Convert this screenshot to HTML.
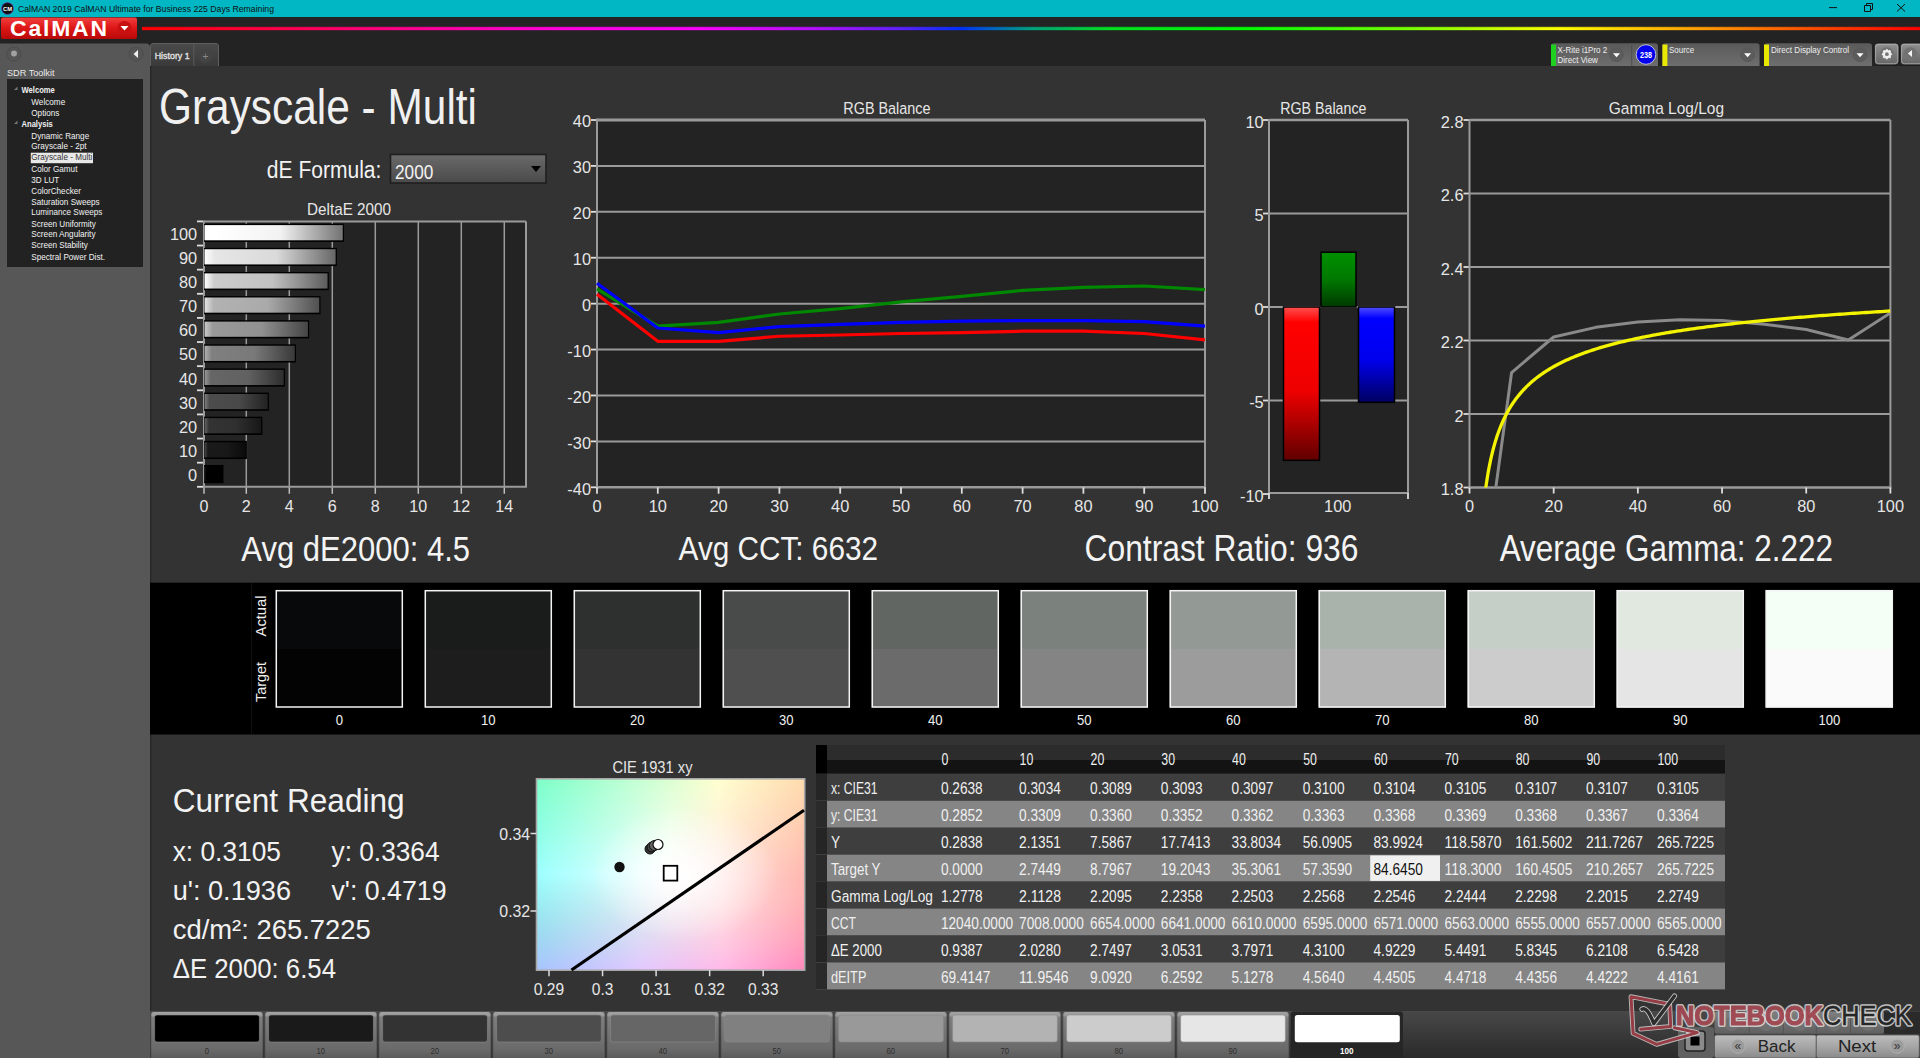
<!DOCTYPE html>
<html><head><meta charset="utf-8"><title>CalMAN</title>
<style>html,body{margin:0;padding:0;background:#333;overflow:hidden;width:1920px;height:1058px}
svg{display:block;font-family:"Liberation Sans",sans-serif}</style></head>
<body><svg width="1920" height="1058" viewBox="0 0 1920 1058">
<defs><linearGradient id="calred" x1="0" y1="0" x2="0" y2="1"><stop offset="0" stop-color="#f04040"/><stop offset="0.45" stop-color="#e01818"/><stop offset="1" stop-color="#b80808"/></linearGradient>
<linearGradient id="rainbow" x1="0" y1="0" x2="1" y2="0"><stop offset="0.0" stop-color="#ff0000"/><stop offset="0.117" stop-color="#ff0070"/><stop offset="0.2351" stop-color="#ff00e0"/><stop offset="0.3138" stop-color="#ff00ff"/><stop offset="0.3813" stop-color="#b010ff"/><stop offset="0.4263" stop-color="#6020ff"/><stop offset="0.4601" stop-color="#0030ff"/><stop offset="0.4994" stop-color="#00a080"/><stop offset="0.5444" stop-color="#00e020"/><stop offset="0.6232" stop-color="#00ff00"/><stop offset="0.7188" stop-color="#80ff00"/><stop offset="0.7975" stop-color="#ffff00"/><stop offset="0.8875" stop-color="#ff9000"/><stop offset="1.0" stop-color="#ff0000"/></linearGradient>
<linearGradient id="tabg" x1="0" y1="0" x2="0" y2="1"><stop offset="0" stop-color="#4a4a4a"/><stop offset="1" stop-color="#3a3a3a"/></linearGradient>
<linearGradient id="tbg" x1="0" y1="0" x2="0" y2="1"><stop offset="0" stop-color="#5a5a5a"/><stop offset="1" stop-color="#6e6e6e"/></linearGradient>
<linearGradient id="btng" x1="0" y1="0" x2="0" y2="1"><stop offset="0" stop-color="#9a9a9a"/><stop offset="0.15" stop-color="#8a8a8a"/><stop offset="1" stop-color="#646464"/></linearGradient>
<linearGradient id="ddg" x1="0" y1="0" x2="0" y2="1"><stop offset="0" stop-color="#6a6a6a"/><stop offset="1" stop-color="#4a4a4a"/></linearGradient>
<linearGradient id="bar100" x1="0" y1="0" x2="1" y2="0"><stop offset="0" stop-color="#ffffff"/><stop offset="0.08" stop-color="#ffffff"/><stop offset="0.55" stop-color="#f2f2f2"/><stop offset="1" stop-color="#737373"/></linearGradient>
<linearGradient id="bar90" x1="0" y1="0" x2="1" y2="0"><stop offset="0" stop-color="#ffffff"/><stop offset="0.08" stop-color="#e6e6e6"/><stop offset="0.55" stop-color="#dadada"/><stop offset="1" stop-color="#676767"/></linearGradient>
<linearGradient id="bar80" x1="0" y1="0" x2="1" y2="0"><stop offset="0" stop-color="#fefefe"/><stop offset="0.08" stop-color="#cccccc"/><stop offset="0.55" stop-color="#c2c2c2"/><stop offset="1" stop-color="#5c5c5c"/></linearGradient>
<linearGradient id="bar70" x1="0" y1="0" x2="1" y2="0"><stop offset="0" stop-color="#e4e4e4"/><stop offset="0.08" stop-color="#b2b2b2"/><stop offset="0.55" stop-color="#aaaaaa"/><stop offset="1" stop-color="#505050"/></linearGradient>
<linearGradient id="bar60" x1="0" y1="0" x2="1" y2="0"><stop offset="0" stop-color="#cbcbcb"/><stop offset="0.08" stop-color="#999999"/><stop offset="0.55" stop-color="#919191"/><stop offset="1" stop-color="#454545"/></linearGradient>
<linearGradient id="bar50" x1="0" y1="0" x2="1" y2="0"><stop offset="0" stop-color="#b2b2b2"/><stop offset="0.08" stop-color="#808080"/><stop offset="0.55" stop-color="#797979"/><stop offset="1" stop-color="#393939"/></linearGradient>
<linearGradient id="bar40" x1="0" y1="0" x2="1" y2="0"><stop offset="0" stop-color="#989898"/><stop offset="0.08" stop-color="#666666"/><stop offset="0.55" stop-color="#616161"/><stop offset="1" stop-color="#2e2e2e"/></linearGradient>
<linearGradient id="bar30" x1="0" y1="0" x2="1" y2="0"><stop offset="0" stop-color="#7e7e7e"/><stop offset="0.08" stop-color="#4c4c4c"/><stop offset="0.55" stop-color="#494949"/><stop offset="1" stop-color="#222222"/></linearGradient>
<linearGradient id="bar20" x1="0" y1="0" x2="1" y2="0"><stop offset="0" stop-color="#656565"/><stop offset="0.08" stop-color="#333333"/><stop offset="0.55" stop-color="#303030"/><stop offset="1" stop-color="#171717"/></linearGradient>
<linearGradient id="bar10" x1="0" y1="0" x2="1" y2="0"><stop offset="0" stop-color="#4c4c4c"/><stop offset="0.08" stop-color="#1a1a1a"/><stop offset="0.55" stop-color="#181818"/><stop offset="1" stop-color="#0b0b0b"/></linearGradient>
<linearGradient id="bar0" x1="0" y1="0" x2="1" y2="0"><stop offset="0" stop-color="#323232"/><stop offset="0.08" stop-color="#000000"/><stop offset="0.55" stop-color="#000000"/><stop offset="1" stop-color="#000000"/></linearGradient>
<linearGradient id="rbar" x1="0" y1="0" x2="0" y2="1"><stop offset="0" stop-color="#ff5050"/><stop offset="0.1" stop-color="#ff0000"/><stop offset="0.55" stop-color="#ee0000"/><stop offset="1" stop-color="#600000"/></linearGradient>
<linearGradient id="gbar" x1="0" y1="0" x2="0" y2="1"><stop offset="0" stop-color="#009000"/><stop offset="0.5" stop-color="#007800"/><stop offset="1" stop-color="#003800"/></linearGradient>
<linearGradient id="bbar" x1="0" y1="0" x2="0" y2="1"><stop offset="0" stop-color="#5050ff"/><stop offset="0.12" stop-color="#0000ff"/><stop offset="0.55" stop-color="#0000ee"/><stop offset="1" stop-color="#000060"/></linearGradient>
<linearGradient id="cieTop" x1="0" y1="0" x2="1" y2="0"><stop offset="0" stop-color="#7dffc8"/><stop offset="0.35" stop-color="#c0ffd4"/><stop offset="0.68" stop-color="#ffffd0"/><stop offset="1" stop-color="#ffdcae"/></linearGradient>
<linearGradient id="cieBot" x1="0" y1="0" x2="1" y2="0"><stop offset="0" stop-color="#a8c4ff"/><stop offset="0.4" stop-color="#e4c8ff"/><stop offset="0.7" stop-color="#ffb8e8"/><stop offset="1" stop-color="#ff88bc"/></linearGradient>
<linearGradient id="cieMid" x1="0" y1="0" x2="1" y2="0"><stop offset="0" stop-color="#9cffff"/><stop offset="0.5" stop-color="#ffffff"/><stop offset="1" stop-color="#ffb8b0"/></linearGradient>
<linearGradient id="fadeDown" x1="0" y1="0" x2="0" y2="1"><stop offset="0" stop-color="#fff" stop-opacity="0"/><stop offset="1" stop-color="#fff" stop-opacity="1"/></linearGradient>
<linearGradient id="fadeMid" x1="0" y1="0" x2="0" y2="1"><stop offset="0" stop-color="#fff" stop-opacity="0"/><stop offset="0.5" stop-color="#fff" stop-opacity="1"/><stop offset="1" stop-color="#fff" stop-opacity="0"/></linearGradient>
<mask id="mDown"><rect x="536.5" y="874.5" width="268.2" height="95.7" fill="url(#fadeDown)"/></mask>
<mask id="mMid"><rect x="536.5" y="778.8" width="268.2" height="191.4" fill="url(#fadeMid)"/></mask>
<radialGradient id="cieW" cx="0.55" cy="0.5" r="0.35"><stop offset="0" stop-color="#fff" stop-opacity="0.9"/><stop offset="1" stop-color="#fff" stop-opacity="0"/></radialGradient>
<linearGradient id="stripg" x1="0" y1="0" x2="0" y2="1"><stop offset="0" stop-color="#484848"/><stop offset="0.1" stop-color="#454545"/><stop offset="1" stop-color="#2a2a2a"/></linearGradient>
<linearGradient id="sbtn" x1="0" y1="0" x2="0" y2="1"><stop offset="0" stop-color="#a4a4a4"/><stop offset="0.08" stop-color="#9a9a9a"/><stop offset="0.12" stop-color="#7e7e7e"/><stop offset="0.75" stop-color="#6a6a6a"/><stop offset="1" stop-color="#555555"/></linearGradient>
<linearGradient id="navg" x1="0" y1="0" x2="0" y2="1"><stop offset="0" stop-color="#bdbdbd"/><stop offset="0.5" stop-color="#a6a6a6"/><stop offset="1" stop-color="#8a8a8a"/></linearGradient>
<linearGradient id="rowg" x1="0" y1="0" x2="0" y2="1"><stop offset="0" stop-color="#808080"/><stop offset="1" stop-color="#606060"/></linearGradient></defs>
<rect x="0.00" y="0.00" width="1920.00" height="17.00" fill="#00b7c3"/>
<circle cx="7.50" cy="8.50" r="6.00" fill="#111"/>
<circle cx="7.5" cy="8.5" r="6" fill="none" stroke="#7a3ccf" stroke-width="0.8" opacity="0.7"/>
<text x="7.50" y="10.60" font-size="6.00" fill="#fff" text-anchor="middle" textLength="9.00" lengthAdjust="spacingAndGlyphs" font-weight="bold">CM</text>
<text x="17.90" y="11.70" font-size="9.13" fill="#101010" textLength="256.10" lengthAdjust="spacingAndGlyphs">CalMAN 2019 CalMAN Ultimate for Business 225 Days Remaining</text>
<line x1="1829.00" y1="7.60" x2="1837.00" y2="7.60" stroke="#111" stroke-width="1.00"/>
<path d="M1864.5,5.5 h6 v6 h-6 z" fill="none" stroke="#111" stroke-width="1.00"/>
<path d="M1866.5,5.5 v-2 h6 v6 h-2" fill="none" stroke="#111" stroke-width="1.00"/>
<line x1="1897.00" y1="4.00" x2="1905.00" y2="11.50" stroke="#111" stroke-width="1.00"/>
<line x1="1905.00" y1="4.00" x2="1897.00" y2="11.50" stroke="#111" stroke-width="1.00"/>
<rect x="0.00" y="17.00" width="1920.00" height="49.00" fill="#232323"/>
<rect x="1" y="17.5" width="136" height="21.5" rx="2" fill="url(#calred)"/>
<text x="10.00" y="35.80" font-size="22.90" fill="#ffffff" textLength="97.00" lengthAdjust="spacing" font-weight="bold">CalMAN</text>
<circle cx="124.50" cy="28.00" r="7.00" fill="#c81010"/>
<path d="M120.5,26 L128.5,26 L124.5,30.5 Z" fill="#ffffff" stroke="none" stroke-width="1.00"/>
<rect x="142.00" y="26.50" width="1778.00" height="4.00" fill="url(#rainbow)" opacity="0.35"/>
<rect x="142.00" y="27.20" width="1778.00" height="2.80" fill="url(#rainbow)"/>
<path d="M0,43.5 H146 Q150,43.5 150,47.5 V1058 H0 Z" fill="#575757" stroke="none" stroke-width="1.00"/>
<circle cx="14.00" cy="54.00" r="7.00" fill="#555" stroke="#4c4c4c" stroke-width="1"/>
<circle cx="14.00" cy="53.50" r="3.00" fill="#a0a0a0"/>
<circle cx="136.00" cy="54.00" r="7.00" fill="#555" stroke="#4c4c4c" stroke-width="1"/>
<path d="M138,50 L138,58 L133.5,54 Z" fill="#f0f0f0" stroke="none" stroke-width="1.00"/>
<text x="7.00" y="76.00" font-size="9.86" fill="#e8e8e8" textLength="47.50" lengthAdjust="spacingAndGlyphs">SDR Toolkit</text>
<rect x="7.00" y="79.00" width="136.00" height="188.00" fill="#222222"/>
<rect x="30.80" y="152.70" width="62.20" height="10.50" fill="#e8e8e8"/>
<text x="21.50" y="92.60" font-size="8.84" fill="#f2f2f2" textLength="33.38" lengthAdjust="spacingAndGlyphs" font-weight="bold">Welcome</text>
<text x="31.30" y="104.70" font-size="8.84" fill="#f2f2f2" textLength="33.90" lengthAdjust="spacingAndGlyphs">Welcome</text>
<text x="31.30" y="115.50" font-size="8.84" fill="#f2f2f2" textLength="28.03" lengthAdjust="spacingAndGlyphs">Options</text>
<text x="21.50" y="126.70" font-size="8.84" fill="#f2f2f2" textLength="31.27" lengthAdjust="spacingAndGlyphs" font-weight="bold">Analysis</text>
<text x="31.30" y="138.70" font-size="8.84" fill="#f2f2f2" textLength="57.86" lengthAdjust="spacingAndGlyphs">Dynamic Range</text>
<text x="31.30" y="149.30" font-size="8.84" fill="#f2f2f2" textLength="55.15" lengthAdjust="spacingAndGlyphs">Grayscale - 2pt</text>
<text x="31.30" y="160.20" font-size="8.84" fill="#333333" textLength="61.01" lengthAdjust="spacingAndGlyphs">Grayscale - Multi</text>
<text x="31.30" y="171.60" font-size="8.84" fill="#f2f2f2" textLength="46.10" lengthAdjust="spacingAndGlyphs">Color Gamut</text>
<text x="31.30" y="182.50" font-size="8.84" fill="#f2f2f2" textLength="28.02" lengthAdjust="spacingAndGlyphs">3D LUT</text>
<text x="31.30" y="193.60" font-size="8.84" fill="#f2f2f2" textLength="49.72" lengthAdjust="spacingAndGlyphs">ColorChecker</text>
<text x="31.30" y="204.50" font-size="8.84" fill="#f2f2f2" textLength="68.27" lengthAdjust="spacingAndGlyphs">Saturation Sweeps</text>
<text x="31.30" y="215.40" font-size="8.84" fill="#f2f2f2" textLength="70.98" lengthAdjust="spacingAndGlyphs">Luminance Sweeps</text>
<text x="31.30" y="226.50" font-size="8.84" fill="#f2f2f2" textLength="64.63" lengthAdjust="spacingAndGlyphs">Screen Uniformity</text>
<text x="31.30" y="237.40" font-size="8.84" fill="#f2f2f2" textLength="64.20" lengthAdjust="spacingAndGlyphs">Screen Angularity</text>
<text x="31.30" y="248.30" font-size="8.84" fill="#f2f2f2" textLength="56.51" lengthAdjust="spacingAndGlyphs">Screen Stability</text>
<text x="31.30" y="259.60" font-size="8.84" fill="#f2f2f2" textLength="73.68" lengthAdjust="spacingAndGlyphs">Spectral Power Dist.</text>
<path d="M14,90 L17.5,90 L17.5,86.5 Z" fill="#777" stroke="none" stroke-width="1.00"/>
<path d="M14,124 L17.5,124 L17.5,120.5 Z" fill="#777" stroke="none" stroke-width="1.00"/>
<path d="M150.5,66 V46 Q150.5,43.5 153,43.5 H216 Q218.5,43.5 218.5,46 V66" fill="url(#tabg)" stroke="#5e5e5e" stroke-width="1"/>
<line x1="193.80" y1="44.00" x2="193.80" y2="66.00" stroke="#5a5a5a" stroke-width="1.00"/>
<text x="154.70" y="58.80" font-size="9.86" fill="#e4e4e4" textLength="35.00" lengthAdjust="spacingAndGlyphs" stroke="#e4e4e4" stroke-width="0.35">History 1</text>
<circle cx="205.50" cy="56.00" r="7.00" fill="#444"/>
<text x="205.50" y="59.50" font-size="10.00" fill="#8a8a8a" text-anchor="middle">+</text>
<path d="M1551.0,66 V46 Q1551.0,43.3 1554.0,43.3 H1655.0 Q1658.0,43.3 1658.0,46 V66 Z" fill="url(#tbg)"/>
<rect x="1551.00" y="44.50" width="5.00" height="21.50" fill="#20d020"/>
<text x="1557.50" y="52.60" font-size="8.41" fill="#eeeeee" textLength="49.71" lengthAdjust="spacingAndGlyphs">X-Rite i1Pro 2</text>
<text x="1557.50" y="63.00" font-size="8.41" fill="#eeeeee" textLength="40.38" lengthAdjust="spacingAndGlyphs">Direct View</text>
<circle cx="1616.50" cy="54.70" r="6.80" fill="#5c5c5c" stroke="#555" stroke-width="0.8"/>
<path d="M1613.0,53.2 L1620.0,53.2 L1616.5,57.2 Z" fill="#ffffff" stroke="none" stroke-width="1.00"/>
<line x1="1631.70" y1="45.00" x2="1631.70" y2="66.00" stroke="#4e4e4e" stroke-width="1.00"/>
<circle cx="1646.00" cy="54.50" r="9.80" fill="#0000ee" stroke="#e0e0e0" stroke-width="0.8"/>
<text x="1646.00" y="57.70" font-size="8.99" fill="#ffffff" text-anchor="middle" textLength="11.99" lengthAdjust="spacingAndGlyphs" font-weight="bold">238</text>
<path d="M1662.4,66 V46 Q1662.4,43.3 1665.4,43.3 H1756.6 Q1759.6,43.3 1759.6,46 V66 Z" fill="url(#tbg)"/>
<rect x="1662.40" y="44.50" width="5.00" height="21.50" fill="#e8e800"/>
<text x="1669.00" y="52.60" font-size="8.41" fill="#eeeeee" textLength="25.30" lengthAdjust="spacingAndGlyphs">Source</text>
<circle cx="1747.60" cy="54.70" r="6.80" fill="#5c5c5c" stroke="#555" stroke-width="0.8"/>
<path d="M1744.1,53.2 L1751.1,53.2 L1747.6,57.2 Z" fill="#ffffff" stroke="none" stroke-width="1.00"/>
<path d="M1764.0,66 V46 Q1764.0,43.3 1767.0,43.3 H1869.0 Q1872.0,43.3 1872.0,46 V66 Z" fill="url(#tbg)"/>
<rect x="1764.00" y="44.50" width="5.00" height="21.50" fill="#e8e800"/>
<text x="1771.00" y="52.60" font-size="8.41" fill="#eeeeee" textLength="78.03" lengthAdjust="spacingAndGlyphs">Direct Display Control</text>
<circle cx="1860.00" cy="54.70" r="6.80" fill="#5c5c5c" stroke="#555" stroke-width="0.8"/>
<path d="M1856.5,53.2 L1863.5,53.2 L1860.0,57.2 Z" fill="#ffffff" stroke="none" stroke-width="1.00"/>
<rect x="1874.3" y="43.1" width="24.7" height="21.9" rx="3.5" fill="url(#btng)" stroke="#151515" stroke-width="0.9"/>
<rect x="1875.6" y="44.4" width="22.1" height="19.3" rx="2.8" fill="none" stroke="#b0b0b0" stroke-width="0.7"/>
<circle cx="1886.90" cy="54.20" r="7.00" fill="#727272"/>
<polygon points="1886.90,49.20 1888.39,50.60 1890.44,50.66 1890.50,52.71 1891.90,54.20 1890.50,55.69 1890.44,57.74 1888.39,57.80 1886.90,59.20 1885.41,57.80 1883.36,57.74 1883.30,55.69 1881.90,54.20 1883.30,52.71 1883.36,50.66 1885.41,50.60" fill="#f0f0f0" stroke="#f0f0f0" stroke-width="0.8" stroke-linejoin="round"/>
<circle cx="1886.90" cy="54.20" r="1.90" fill="#787878"/>
<rect x="1900.3" y="43.1" width="30" height="21.9" rx="3.5" fill="url(#btng)" stroke="#151515" stroke-width="0.9"/>
<rect x="1901.6" y="44.4" width="30" height="19.3" rx="2.8" fill="none" stroke="#b0b0b0" stroke-width="0.7"/>
<circle cx="1910.40" cy="54.20" r="7.00" fill="#727272"/>
<path d="M1912,49.9 L1912,57 L1907.9,53.6 Z" fill="#f4f4f4" stroke="none" stroke-width="1.00"/>
<rect x="150.00" y="66.00" width="1770.00" height="992.00" fill="#333333"/>
<line x1="150.60" y1="66.00" x2="150.60" y2="1058.00" stroke="#262626" stroke-width="1.20"/>
<text x="159.00" y="124.40" font-size="50.58" fill="#f0f0f0" textLength="318.00" lengthAdjust="spacingAndGlyphs">Grayscale - Multi</text>
<text x="266.80" y="177.50" font-size="24.49" fill="#f2f2f2" textLength="114.60" lengthAdjust="spacingAndGlyphs">dE Formula:</text>
<rect x="390.5" y="154.5" width="155.5" height="28.5" fill="url(#ddg)" stroke="#1e1e1e" stroke-width="1.6"/>
<text x="395.00" y="178.80" font-size="20.00" fill="#f2f2f2" textLength="38.26" lengthAdjust="spacingAndGlyphs">2000</text>
<path d="M531,166 L541,166 L536,172 Z" fill="#000000" stroke="none" stroke-width="1.00"/>
<rect x="204.00" y="221.40" width="322.00" height="265.40" fill="#232323"/>
<text x="307.00" y="215.20" font-size="16.81" fill="#e6e6e6" textLength="84.00" lengthAdjust="spacingAndGlyphs">DeltaE 2000</text>
<line x1="246.30" y1="221.40" x2="246.30" y2="486.80" stroke="#9a9a9a" stroke-width="1.50"/>
<line x1="289.30" y1="221.40" x2="289.30" y2="486.80" stroke="#9a9a9a" stroke-width="1.50"/>
<line x1="332.30" y1="221.40" x2="332.30" y2="486.80" stroke="#9a9a9a" stroke-width="1.50"/>
<line x1="375.30" y1="221.40" x2="375.30" y2="486.80" stroke="#9a9a9a" stroke-width="1.50"/>
<line x1="418.30" y1="221.40" x2="418.30" y2="486.80" stroke="#9a9a9a" stroke-width="1.50"/>
<line x1="461.30" y1="221.40" x2="461.30" y2="486.80" stroke="#9a9a9a" stroke-width="1.50"/>
<line x1="504.30" y1="221.40" x2="504.30" y2="486.80" stroke="#9a9a9a" stroke-width="1.50"/>
<line x1="204.00" y1="486.80" x2="204.00" y2="493.80" stroke="#bdbdbd" stroke-width="1.50"/>
<text x="204.00" y="511.80" font-size="17.10" fill="#e6e6e6" text-anchor="middle" textLength="8.94" lengthAdjust="spacingAndGlyphs">0</text>
<line x1="246.30" y1="486.80" x2="246.30" y2="493.80" stroke="#bdbdbd" stroke-width="1.50"/>
<text x="246.30" y="511.80" font-size="17.10" fill="#e6e6e6" text-anchor="middle" textLength="8.94" lengthAdjust="spacingAndGlyphs">2</text>
<line x1="289.30" y1="486.80" x2="289.30" y2="493.80" stroke="#bdbdbd" stroke-width="1.50"/>
<text x="289.30" y="511.80" font-size="17.10" fill="#e6e6e6" text-anchor="middle" textLength="8.94" lengthAdjust="spacingAndGlyphs">4</text>
<line x1="332.30" y1="486.80" x2="332.30" y2="493.80" stroke="#bdbdbd" stroke-width="1.50"/>
<text x="332.30" y="511.80" font-size="17.10" fill="#e6e6e6" text-anchor="middle" textLength="8.94" lengthAdjust="spacingAndGlyphs">6</text>
<line x1="375.30" y1="486.80" x2="375.30" y2="493.80" stroke="#bdbdbd" stroke-width="1.50"/>
<text x="375.30" y="511.80" font-size="17.10" fill="#e6e6e6" text-anchor="middle" textLength="8.94" lengthAdjust="spacingAndGlyphs">8</text>
<line x1="418.30" y1="486.80" x2="418.30" y2="493.80" stroke="#bdbdbd" stroke-width="1.50"/>
<text x="418.30" y="511.80" font-size="17.10" fill="#e6e6e6" text-anchor="middle" textLength="17.88" lengthAdjust="spacingAndGlyphs">10</text>
<line x1="461.30" y1="486.80" x2="461.30" y2="493.80" stroke="#bdbdbd" stroke-width="1.50"/>
<text x="461.30" y="511.80" font-size="17.10" fill="#e6e6e6" text-anchor="middle" textLength="17.88" lengthAdjust="spacingAndGlyphs">12</text>
<line x1="504.30" y1="486.80" x2="504.30" y2="493.80" stroke="#bdbdbd" stroke-width="1.50"/>
<text x="504.30" y="511.80" font-size="17.10" fill="#e6e6e6" text-anchor="middle" textLength="17.88" lengthAdjust="spacingAndGlyphs">14</text>
<line x1="204.00" y1="221.40" x2="526.00" y2="221.40" stroke="#9a9a9a" stroke-width="2.00"/>
<line x1="526.00" y1="221.40" x2="526.00" y2="486.80" stroke="#9a9a9a" stroke-width="2.00"/>
<line x1="204.00" y1="220.40" x2="204.00" y2="487.80" stroke="#9a9a9a" stroke-width="2.00"/>
<line x1="203.00" y1="486.80" x2="527.00" y2="486.80" stroke="#9a9a9a" stroke-width="2.00"/>
<line x1="197.00" y1="221.40" x2="203.00" y2="221.40" stroke="#dddddd" stroke-width="1.80"/>
<line x1="197.00" y1="245.53" x2="203.00" y2="245.53" stroke="#dddddd" stroke-width="1.80"/>
<line x1="197.00" y1="269.65" x2="203.00" y2="269.65" stroke="#dddddd" stroke-width="1.80"/>
<line x1="197.00" y1="293.78" x2="203.00" y2="293.78" stroke="#dddddd" stroke-width="1.80"/>
<line x1="197.00" y1="317.91" x2="203.00" y2="317.91" stroke="#dddddd" stroke-width="1.80"/>
<line x1="197.00" y1="342.04" x2="203.00" y2="342.04" stroke="#dddddd" stroke-width="1.80"/>
<line x1="197.00" y1="366.16" x2="203.00" y2="366.16" stroke="#dddddd" stroke-width="1.80"/>
<line x1="197.00" y1="390.29" x2="203.00" y2="390.29" stroke="#dddddd" stroke-width="1.80"/>
<line x1="197.00" y1="414.42" x2="203.00" y2="414.42" stroke="#dddddd" stroke-width="1.80"/>
<line x1="197.00" y1="438.55" x2="203.00" y2="438.55" stroke="#dddddd" stroke-width="1.80"/>
<line x1="197.00" y1="462.67" x2="203.00" y2="462.67" stroke="#dddddd" stroke-width="1.80"/>
<line x1="197.00" y1="486.80" x2="203.00" y2="486.80" stroke="#dddddd" stroke-width="1.80"/>
<rect x="204.00" y="223.70" width="139.97" height="18.20" fill="#000000"/>
<rect x="204.50" y="225.10" width="138.27" height="15.20" fill="url(#bar100)"/>
<text x="197.20" y="239.76" font-size="17.39" fill="#e6e6e6" text-anchor="end" textLength="27.28" lengthAdjust="spacingAndGlyphs">100</text>
<rect x="204.00" y="247.83" width="132.83" height="18.20" fill="#000000"/>
<rect x="204.50" y="249.23" width="131.13" height="15.20" fill="url(#bar90)"/>
<text x="197.20" y="263.89" font-size="17.39" fill="#e6e6e6" text-anchor="end" textLength="18.18" lengthAdjust="spacingAndGlyphs">90</text>
<rect x="204.00" y="271.95" width="124.74" height="18.20" fill="#000000"/>
<rect x="204.50" y="273.35" width="123.04" height="15.20" fill="url(#bar80)"/>
<text x="197.20" y="288.02" font-size="17.39" fill="#e6e6e6" text-anchor="end" textLength="18.18" lengthAdjust="spacingAndGlyphs">80</text>
<rect x="204.00" y="296.08" width="116.46" height="18.20" fill="#000000"/>
<rect x="204.50" y="297.48" width="114.76" height="15.20" fill="url(#bar70)"/>
<text x="197.20" y="312.15" font-size="17.39" fill="#e6e6e6" text-anchor="end" textLength="18.18" lengthAdjust="spacingAndGlyphs">70</text>
<rect x="204.00" y="320.21" width="105.14" height="18.20" fill="#000000"/>
<rect x="204.50" y="321.61" width="103.44" height="15.20" fill="url(#bar60)"/>
<text x="197.20" y="336.27" font-size="17.39" fill="#e6e6e6" text-anchor="end" textLength="18.18" lengthAdjust="spacingAndGlyphs">60</text>
<rect x="204.00" y="344.34" width="91.97" height="18.20" fill="#000000"/>
<rect x="204.50" y="345.74" width="90.27" height="15.20" fill="url(#bar50)"/>
<text x="197.20" y="360.40" font-size="17.39" fill="#e6e6e6" text-anchor="end" textLength="18.18" lengthAdjust="spacingAndGlyphs">50</text>
<rect x="204.00" y="368.46" width="80.94" height="18.20" fill="#000000"/>
<rect x="204.50" y="369.86" width="79.24" height="15.20" fill="url(#bar40)"/>
<text x="197.20" y="384.53" font-size="17.39" fill="#e6e6e6" text-anchor="end" textLength="18.18" lengthAdjust="spacingAndGlyphs">40</text>
<rect x="204.00" y="392.59" width="64.94" height="18.20" fill="#000000"/>
<rect x="204.50" y="393.99" width="63.24" height="15.20" fill="url(#bar30)"/>
<text x="197.20" y="408.65" font-size="17.39" fill="#e6e6e6" text-anchor="end" textLength="18.18" lengthAdjust="spacingAndGlyphs">30</text>
<rect x="204.00" y="416.72" width="58.42" height="18.20" fill="#000000"/>
<rect x="204.50" y="418.12" width="56.72" height="15.20" fill="url(#bar20)"/>
<text x="197.20" y="432.78" font-size="17.39" fill="#e6e6e6" text-anchor="end" textLength="18.18" lengthAdjust="spacingAndGlyphs">20</text>
<rect x="204.00" y="440.85" width="42.90" height="18.20" fill="#000000"/>
<rect x="204.50" y="442.25" width="41.20" height="15.20" fill="url(#bar10)"/>
<text x="197.20" y="456.91" font-size="17.39" fill="#e6e6e6" text-anchor="end" textLength="18.18" lengthAdjust="spacingAndGlyphs">10</text>
<rect x="204.00" y="464.97" width="19.48" height="18.20" fill="#000000"/>
<rect x="204.50" y="466.37" width="17.78" height="15.20" fill="url(#bar0)"/>
<text x="197.20" y="481.04" font-size="17.39" fill="#e6e6e6" text-anchor="end" textLength="9.09" lengthAdjust="spacingAndGlyphs">0</text>
<text x="241.30" y="560.60" font-size="35.36" fill="#f4f4f4" textLength="228.70" lengthAdjust="spacingAndGlyphs">Avg dE2000: 4.5</text>
<rect x="597.00" y="120.00" width="608.00" height="367.30" fill="#232323"/>
<text x="843.30" y="113.50" font-size="16.23" fill="#e6e6e6" textLength="87.20" lengthAdjust="spacingAndGlyphs">RGB Balance</text>
<line x1="597.00" y1="165.91" x2="1205.00" y2="165.91" stroke="#9a9a9a" stroke-width="2.00"/>
<line x1="597.00" y1="211.82" x2="1205.00" y2="211.82" stroke="#9a9a9a" stroke-width="2.00"/>
<line x1="597.00" y1="257.74" x2="1205.00" y2="257.74" stroke="#9a9a9a" stroke-width="2.00"/>
<line x1="597.00" y1="303.65" x2="1205.00" y2="303.65" stroke="#9a9a9a" stroke-width="2.00"/>
<line x1="597.00" y1="349.56" x2="1205.00" y2="349.56" stroke="#9a9a9a" stroke-width="2.00"/>
<line x1="597.00" y1="395.48" x2="1205.00" y2="395.48" stroke="#9a9a9a" stroke-width="2.00"/>
<line x1="597.00" y1="441.39" x2="1205.00" y2="441.39" stroke="#9a9a9a" stroke-width="2.00"/>
<line x1="591.00" y1="120.00" x2="597.00" y2="120.00" stroke="#dddddd" stroke-width="1.80"/>
<text x="591.00" y="126.80" font-size="17.39" fill="#e6e6e6" text-anchor="end" textLength="18.18" lengthAdjust="spacingAndGlyphs">40</text>
<line x1="591.00" y1="165.91" x2="597.00" y2="165.91" stroke="#dddddd" stroke-width="1.80"/>
<text x="591.00" y="172.83" font-size="17.39" fill="#e6e6e6" text-anchor="end" textLength="18.18" lengthAdjust="spacingAndGlyphs">30</text>
<line x1="591.00" y1="211.82" x2="597.00" y2="211.82" stroke="#dddddd" stroke-width="1.80"/>
<text x="591.00" y="218.85" font-size="17.39" fill="#e6e6e6" text-anchor="end" textLength="18.18" lengthAdjust="spacingAndGlyphs">20</text>
<line x1="591.00" y1="257.74" x2="597.00" y2="257.74" stroke="#dddddd" stroke-width="1.80"/>
<text x="591.00" y="264.88" font-size="17.39" fill="#e6e6e6" text-anchor="end" textLength="18.18" lengthAdjust="spacingAndGlyphs">10</text>
<line x1="591.00" y1="303.65" x2="597.00" y2="303.65" stroke="#dddddd" stroke-width="1.80"/>
<text x="591.00" y="310.90" font-size="17.39" fill="#e6e6e6" text-anchor="end" textLength="9.09" lengthAdjust="spacingAndGlyphs">0</text>
<line x1="591.00" y1="349.56" x2="597.00" y2="349.56" stroke="#dddddd" stroke-width="1.80"/>
<text x="591.00" y="356.93" font-size="17.39" fill="#e6e6e6" text-anchor="end" textLength="23.63" lengthAdjust="spacingAndGlyphs">-10</text>
<line x1="591.00" y1="395.48" x2="597.00" y2="395.48" stroke="#dddddd" stroke-width="1.80"/>
<text x="591.00" y="402.95" font-size="17.39" fill="#e6e6e6" text-anchor="end" textLength="23.63" lengthAdjust="spacingAndGlyphs">-20</text>
<line x1="591.00" y1="441.39" x2="597.00" y2="441.39" stroke="#dddddd" stroke-width="1.80"/>
<text x="591.00" y="448.98" font-size="17.39" fill="#e6e6e6" text-anchor="end" textLength="23.63" lengthAdjust="spacingAndGlyphs">-30</text>
<line x1="591.00" y1="487.30" x2="597.00" y2="487.30" stroke="#dddddd" stroke-width="1.80"/>
<text x="591.00" y="495.00" font-size="17.39" fill="#e6e6e6" text-anchor="end" textLength="23.63" lengthAdjust="spacingAndGlyphs">-40</text>
<line x1="597.00" y1="120.00" x2="1205.00" y2="120.00" stroke="#9a9a9a" stroke-width="3.00"/>
<line x1="1205.00" y1="120.00" x2="1205.00" y2="487.30" stroke="#9a9a9a" stroke-width="2.00"/>
<line x1="597.00" y1="118.50" x2="597.00" y2="488.30" stroke="#9a9a9a" stroke-width="2.00"/>
<line x1="596.00" y1="487.30" x2="1206.00" y2="487.30" stroke="#9a9a9a" stroke-width="2.50"/>
<line x1="597.00" y1="487.30" x2="597.00" y2="493.70" stroke="#dddddd" stroke-width="1.80"/>
<text x="597.00" y="511.80" font-size="17.39" fill="#e6e6e6" text-anchor="middle" textLength="9.09" lengthAdjust="spacingAndGlyphs">0</text>
<line x1="657.80" y1="487.30" x2="657.80" y2="493.70" stroke="#dddddd" stroke-width="1.80"/>
<text x="657.80" y="511.80" font-size="17.39" fill="#e6e6e6" text-anchor="middle" textLength="18.18" lengthAdjust="spacingAndGlyphs">10</text>
<line x1="718.60" y1="487.30" x2="718.60" y2="493.70" stroke="#dddddd" stroke-width="1.80"/>
<text x="718.60" y="511.80" font-size="17.39" fill="#e6e6e6" text-anchor="middle" textLength="18.18" lengthAdjust="spacingAndGlyphs">20</text>
<line x1="779.40" y1="487.30" x2="779.40" y2="493.70" stroke="#dddddd" stroke-width="1.80"/>
<text x="779.40" y="511.80" font-size="17.39" fill="#e6e6e6" text-anchor="middle" textLength="18.18" lengthAdjust="spacingAndGlyphs">30</text>
<line x1="840.20" y1="487.30" x2="840.20" y2="493.70" stroke="#dddddd" stroke-width="1.80"/>
<text x="840.20" y="511.80" font-size="17.39" fill="#e6e6e6" text-anchor="middle" textLength="18.18" lengthAdjust="spacingAndGlyphs">40</text>
<line x1="901.00" y1="487.30" x2="901.00" y2="493.70" stroke="#dddddd" stroke-width="1.80"/>
<text x="901.00" y="511.80" font-size="17.39" fill="#e6e6e6" text-anchor="middle" textLength="18.18" lengthAdjust="spacingAndGlyphs">50</text>
<line x1="961.80" y1="487.30" x2="961.80" y2="493.70" stroke="#dddddd" stroke-width="1.80"/>
<text x="961.80" y="511.80" font-size="17.39" fill="#e6e6e6" text-anchor="middle" textLength="18.18" lengthAdjust="spacingAndGlyphs">60</text>
<line x1="1022.60" y1="487.30" x2="1022.60" y2="493.70" stroke="#dddddd" stroke-width="1.80"/>
<text x="1022.60" y="511.80" font-size="17.39" fill="#e6e6e6" text-anchor="middle" textLength="18.18" lengthAdjust="spacingAndGlyphs">70</text>
<line x1="1083.40" y1="487.30" x2="1083.40" y2="493.70" stroke="#dddddd" stroke-width="1.80"/>
<text x="1083.40" y="511.80" font-size="17.39" fill="#e6e6e6" text-anchor="middle" textLength="18.18" lengthAdjust="spacingAndGlyphs">80</text>
<line x1="1144.20" y1="487.30" x2="1144.20" y2="493.70" stroke="#dddddd" stroke-width="1.80"/>
<text x="1144.20" y="511.80" font-size="17.39" fill="#e6e6e6" text-anchor="middle" textLength="18.18" lengthAdjust="spacingAndGlyphs">90</text>
<line x1="1205.00" y1="487.30" x2="1205.00" y2="493.70" stroke="#dddddd" stroke-width="1.80"/>
<text x="1205.00" y="511.80" font-size="17.39" fill="#e6e6e6" text-anchor="middle" textLength="27.28" lengthAdjust="spacingAndGlyphs">100</text>
<polyline points="597.00,288.96 657.80,326.15 718.60,322.34 779.40,314.03 840.20,308.70 901.00,301.81 961.80,296.30 1022.60,290.34 1083.40,287.31 1144.20,286.02 1205.00,289.60" fill="none" stroke="#008800" stroke-width="3.20" stroke-linejoin="round"/>
<polyline points="597.00,283.22 657.80,327.98 718.60,332.57 779.40,326.61 840.20,324.31 901.00,322.29 961.80,321.10 1022.60,320.64 1083.40,320.64 1144.20,321.56 1205.00,326.15" fill="none" stroke="#0000ff" stroke-width="3.20" stroke-linejoin="round"/>
<polyline points="597.00,294.19 657.80,341.30 718.60,341.30 779.40,336.25 840.20,335.01 901.00,333.49 961.80,332.57 1022.60,331.20 1083.40,331.20 1144.20,333.49 1205.00,339.92" fill="none" stroke="#ff0000" stroke-width="3.20" stroke-linejoin="round"/>
<text x="678.60" y="559.60" font-size="33.77" fill="#f4f4f4" textLength="199.40" lengthAdjust="spacingAndGlyphs">Avg CCT: 6632</text>
<rect x="1269.00" y="120.00" width="139.00" height="373.00" fill="#232323"/>
<text x="1280.30" y="113.50" font-size="16.23" fill="#e6e6e6" textLength="86.10" lengthAdjust="spacingAndGlyphs">RGB Balance</text>
<line x1="1269.00" y1="213.50" x2="1408.00" y2="213.50" stroke="#9a9a9a" stroke-width="2.00"/>
<line x1="1269.00" y1="307.00" x2="1408.00" y2="307.00" stroke="#9a9a9a" stroke-width="2.00"/>
<line x1="1269.00" y1="400.50" x2="1408.00" y2="400.50" stroke="#9a9a9a" stroke-width="2.00"/>
<line x1="1263.00" y1="120.00" x2="1269.00" y2="120.00" stroke="#dddddd" stroke-width="1.80"/>
<text x="1263.70" y="127.70" font-size="17.39" fill="#e6e6e6" text-anchor="end" textLength="18.18" lengthAdjust="spacingAndGlyphs">10</text>
<line x1="1263.00" y1="213.50" x2="1269.00" y2="213.50" stroke="#dddddd" stroke-width="1.80"/>
<text x="1263.70" y="221.20" font-size="17.39" fill="#e6e6e6" text-anchor="end" textLength="9.09" lengthAdjust="spacingAndGlyphs">5</text>
<line x1="1263.00" y1="307.00" x2="1269.00" y2="307.00" stroke="#dddddd" stroke-width="1.80"/>
<text x="1263.70" y="314.70" font-size="17.39" fill="#e6e6e6" text-anchor="end" textLength="9.09" lengthAdjust="spacingAndGlyphs">0</text>
<line x1="1263.00" y1="400.50" x2="1269.00" y2="400.50" stroke="#dddddd" stroke-width="1.80"/>
<text x="1263.70" y="408.20" font-size="17.39" fill="#e6e6e6" text-anchor="end" textLength="14.54" lengthAdjust="spacingAndGlyphs">-5</text>
<line x1="1263.00" y1="494.00" x2="1269.00" y2="494.00" stroke="#dddddd" stroke-width="1.80"/>
<text x="1263.70" y="501.70" font-size="17.39" fill="#e6e6e6" text-anchor="end" textLength="23.63" lengthAdjust="spacingAndGlyphs">-10</text>
<line x1="1269.00" y1="120.00" x2="1408.00" y2="120.00" stroke="#9a9a9a" stroke-width="2.50"/>
<line x1="1408.00" y1="120.00" x2="1408.00" y2="493.00" stroke="#9a9a9a" stroke-width="2.00"/>
<line x1="1269.00" y1="119.00" x2="1269.00" y2="494.00" stroke="#9a9a9a" stroke-width="2.00"/>
<line x1="1268.00" y1="493.00" x2="1409.00" y2="493.00" stroke="#9a9a9a" stroke-width="2.00"/>
<line x1="1269.00" y1="493.00" x2="1269.00" y2="499.00" stroke="#dddddd" stroke-width="1.80"/>
<line x1="1408.00" y1="493.00" x2="1408.00" y2="499.00" stroke="#dddddd" stroke-width="1.80"/>
<text x="1337.70" y="511.80" font-size="17.39" fill="#e6e6e6" text-anchor="middle" textLength="27.28" lengthAdjust="spacingAndGlyphs">100</text>
<rect x="1283.5" y="307.00" width="36" height="153.34" fill="url(#rbar)" stroke="#000" stroke-width="1.5"/>
<rect x="1321" y="252.21" width="35" height="54.79" fill="url(#gbar)" stroke="#000" stroke-width="1.5"/>
<rect x="1358.5" y="307.00" width="36" height="95.37" fill="url(#bbar)" stroke="#000" stroke-width="1.5"/>
<text x="1084.50" y="561.00" font-size="36.23" fill="#f4f4f4" textLength="274.00" lengthAdjust="spacingAndGlyphs">Contrast Ratio: 936</text>
<rect x="1469.50" y="120.00" width="420.90" height="367.50" fill="#232323"/>
<text x="1608.80" y="113.50" font-size="16.23" fill="#e6e6e6" textLength="115.20" lengthAdjust="spacingAndGlyphs">Gamma Log/Log</text>
<line x1="1469.50" y1="193.50" x2="1890.40" y2="193.50" stroke="#9a9a9a" stroke-width="2.00"/>
<line x1="1469.50" y1="267.00" x2="1890.40" y2="267.00" stroke="#9a9a9a" stroke-width="2.00"/>
<line x1="1469.50" y1="340.50" x2="1890.40" y2="340.50" stroke="#9a9a9a" stroke-width="2.00"/>
<line x1="1469.50" y1="414.00" x2="1890.40" y2="414.00" stroke="#9a9a9a" stroke-width="2.00"/>
<line x1="1463.50" y1="120.00" x2="1469.50" y2="120.00" stroke="#dddddd" stroke-width="1.80"/>
<text x="1463.50" y="127.80" font-size="17.39" fill="#e6e6e6" text-anchor="end" textLength="22.73" lengthAdjust="spacingAndGlyphs">2.8</text>
<line x1="1463.50" y1="193.50" x2="1469.50" y2="193.50" stroke="#dddddd" stroke-width="1.80"/>
<text x="1463.50" y="201.30" font-size="17.39" fill="#e6e6e6" text-anchor="end" textLength="22.73" lengthAdjust="spacingAndGlyphs">2.6</text>
<line x1="1463.50" y1="267.00" x2="1469.50" y2="267.00" stroke="#dddddd" stroke-width="1.80"/>
<text x="1463.50" y="274.80" font-size="17.39" fill="#e6e6e6" text-anchor="end" textLength="22.73" lengthAdjust="spacingAndGlyphs">2.4</text>
<line x1="1463.50" y1="340.50" x2="1469.50" y2="340.50" stroke="#dddddd" stroke-width="1.80"/>
<text x="1463.50" y="348.30" font-size="17.39" fill="#e6e6e6" text-anchor="end" textLength="22.73" lengthAdjust="spacingAndGlyphs">2.2</text>
<line x1="1463.50" y1="414.00" x2="1469.50" y2="414.00" stroke="#dddddd" stroke-width="1.80"/>
<text x="1463.50" y="421.80" font-size="17.39" fill="#e6e6e6" text-anchor="end" textLength="9.09" lengthAdjust="spacingAndGlyphs">2</text>
<line x1="1463.50" y1="487.50" x2="1469.50" y2="487.50" stroke="#dddddd" stroke-width="1.80"/>
<text x="1463.50" y="495.30" font-size="17.39" fill="#e6e6e6" text-anchor="end" textLength="22.73" lengthAdjust="spacingAndGlyphs">1.8</text>
<line x1="1469.50" y1="120.00" x2="1890.40" y2="120.00" stroke="#9a9a9a" stroke-width="2.50"/>
<line x1="1890.40" y1="120.00" x2="1890.40" y2="487.50" stroke="#9a9a9a" stroke-width="2.00"/>
<line x1="1469.50" y1="119.00" x2="1469.50" y2="488.50" stroke="#9a9a9a" stroke-width="2.00"/>
<line x1="1468.50" y1="487.50" x2="1891.40" y2="487.50" stroke="#9a9a9a" stroke-width="2.50"/>
<line x1="1469.50" y1="487.50" x2="1469.50" y2="493.50" stroke="#dddddd" stroke-width="1.80"/>
<text x="1469.50" y="511.80" font-size="17.39" fill="#e6e6e6" text-anchor="middle" textLength="9.09" lengthAdjust="spacingAndGlyphs">0</text>
<line x1="1553.68" y1="487.50" x2="1553.68" y2="493.50" stroke="#dddddd" stroke-width="1.80"/>
<text x="1553.68" y="511.80" font-size="17.39" fill="#e6e6e6" text-anchor="middle" textLength="18.18" lengthAdjust="spacingAndGlyphs">20</text>
<line x1="1637.86" y1="487.50" x2="1637.86" y2="493.50" stroke="#dddddd" stroke-width="1.80"/>
<text x="1637.86" y="511.80" font-size="17.39" fill="#e6e6e6" text-anchor="middle" textLength="18.18" lengthAdjust="spacingAndGlyphs">40</text>
<line x1="1722.04" y1="487.50" x2="1722.04" y2="493.50" stroke="#dddddd" stroke-width="1.80"/>
<text x="1722.04" y="511.80" font-size="17.39" fill="#e6e6e6" text-anchor="middle" textLength="18.18" lengthAdjust="spacingAndGlyphs">60</text>
<line x1="1806.22" y1="487.50" x2="1806.22" y2="493.50" stroke="#dddddd" stroke-width="1.80"/>
<text x="1806.22" y="511.80" font-size="17.39" fill="#e6e6e6" text-anchor="middle" textLength="18.18" lengthAdjust="spacingAndGlyphs">80</text>
<line x1="1890.40" y1="487.50" x2="1890.40" y2="493.50" stroke="#dddddd" stroke-width="1.80"/>
<text x="1890.40" y="511.80" font-size="17.39" fill="#e6e6e6" text-anchor="middle" textLength="27.28" lengthAdjust="spacingAndGlyphs">100</text>
<clipPath id="gclip"><rect x="1469.5" y="120.0" width="420.9" height="367.5"/></clipPath>
<polyline points="1469.50,679.41 1511.59,372.55 1553.68,337.01 1595.77,327.34 1637.86,322.01 1679.95,319.63 1722.04,320.43 1764.13,324.18 1806.22,329.55 1848.31,339.95 1890.40,312.97" fill="none" stroke="#8a8a8a" stroke-width="3.00" stroke-linejoin="round" clip-path="url(#gclip)"/>
<polyline points="1482.13,521.14 1482.15,520.90 1482.20,520.29 1482.28,519.38 1482.38,518.21 1482.51,516.80 1482.66,515.18 1482.83,513.38 1483.02,511.40 1483.23,509.28 1483.47,507.03 1483.72,504.67 1483.99,502.22 1484.27,499.69 1484.58,497.10 1484.90,494.46 1485.25,491.78 1485.61,489.07 1485.98,486.36 1486.38,483.63 1486.79,480.90 1487.22,478.18 1487.66,475.48 1488.12,472.79 1488.60,470.12 1489.09,467.49 1489.60,464.88 1490.13,462.31 1490.67,459.77 1491.22,457.27 1491.80,454.80 1492.38,452.38 1492.99,450.00 1493.61,447.66 1494.24,445.36 1494.89,443.11 1495.55,440.89 1496.23,438.72 1496.92,436.59 1497.63,434.50 1498.36,432.45 1499.09,430.45 1499.85,428.48 1500.61,426.55 1501.39,424.66 1502.19,422.81 1503.00,421.00 1503.82,419.22 1504.66,417.48 1505.51,415.77 1506.38,414.10 1507.26,412.46 1508.15,410.86 1509.06,409.28 1509.98,407.74 1510.92,406.22 1511.86,404.74 1512.83,403.29 1513.80,401.86 1514.79,400.46 1515.80,399.09 1516.81,397.74 1517.84,396.42 1518.89,395.13 1519.94,393.86 1521.01,392.61 1522.10,391.39 1523.20,390.18 1524.31,389.00 1525.43,387.85 1526.56,386.71 1527.71,385.59 1528.88,384.49 1530.05,383.41 1531.24,382.35 1532.44,381.31 1533.65,380.29 1534.88,379.28 1536.12,378.29 1537.37,377.32 1538.64,376.37 1539.92,375.42 1541.21,374.50 1542.51,373.59 1543.83,372.69 1545.15,371.81 1546.49,370.95 1547.85,370.09 1549.21,369.25 1550.59,368.43 1551.98,367.61 1553.39,366.81 1554.80,366.02 1556.23,365.25 1557.67,364.48 1559.12,363.73 1560.59,362.98 1562.07,362.25 1563.56,361.53 1565.06,360.82 1566.57,360.12 1568.10,359.42 1569.64,358.74 1571.19,358.07 1572.75,357.41 1574.32,356.76 1575.91,356.11 1577.51,355.48 1579.12,354.85 1580.74,354.23 1582.38,353.62 1584.02,353.02 1585.68,352.42 1587.35,351.84 1589.03,351.26 1590.73,350.69 1592.43,350.12 1594.15,349.57 1595.88,349.02 1597.62,348.47 1599.37,347.94 1601.14,347.41 1602.91,346.89 1604.70,346.37 1606.50,345.86 1608.31,345.35 1610.14,344.86 1611.97,344.36 1613.82,343.88 1615.67,343.40 1617.54,342.92 1619.42,342.45 1621.32,341.99 1623.22,341.53 1625.13,341.08 1627.06,340.63 1629.00,340.18 1630.95,339.74 1632.91,339.31 1634.88,338.88 1636.87,338.46 1638.86,338.04 1640.87,337.62 1642.89,337.21 1644.92,336.81 1646.96,336.40 1649.01,336.01 1651.07,335.61 1653.14,335.22 1655.23,334.84 1657.33,334.46 1659.44,334.08 1661.55,333.71 1663.68,333.34 1665.83,332.97 1667.98,332.61 1670.14,332.25 1672.32,331.89 1674.50,331.54 1676.70,331.19 1678.91,330.85 1681.13,330.51 1683.36,330.17 1685.60,329.83 1687.85,329.50 1690.12,329.17 1692.39,328.85 1694.68,328.53 1696.97,328.21 1699.28,327.89 1701.60,327.58 1703.93,327.27 1706.27,326.96 1708.62,326.65 1710.98,326.35 1713.35,326.05 1715.74,325.76 1718.13,325.46 1720.54,325.17 1722.95,324.88 1725.38,324.59 1727.82,324.31 1730.27,324.03 1732.73,323.75 1735.20,323.47 1737.68,323.20 1740.17,322.93 1742.67,322.66 1745.19,322.39 1747.71,322.12 1750.25,321.86 1752.79,321.60 1755.35,321.34 1757.91,321.09 1760.49,320.83 1763.08,320.58 1765.68,320.33 1768.29,320.08 1770.91,319.84 1773.54,319.59 1776.18,319.35 1778.83,319.11 1781.49,318.87 1784.17,318.63 1786.85,318.40 1789.54,318.17 1792.25,317.93 1794.96,317.71 1797.69,317.48 1800.42,317.25 1803.17,317.03 1805.93,316.81 1808.70,316.59 1811.47,316.37 1814.26,316.15 1817.06,315.93 1819.87,315.72 1822.69,315.51 1825.52,315.30 1828.36,315.09 1831.21,314.88 1834.07,314.67 1836.95,314.47 1839.83,314.26 1842.72,314.06 1845.62,313.86 1848.54,313.66 1851.46,313.46 1854.39,313.27 1857.34,313.07 1860.29,312.88 1863.26,312.69 1866.23,312.50 1869.22,312.31 1872.21,312.12 1875.22,311.93 1878.23,311.75 1881.26,311.56 1884.30,311.38 1887.34,311.20 1890.40,311.02" fill="none" stroke="#f4f400" stroke-width="3.30" stroke-linejoin="round" clip-path="url(#gclip)"/>
<text x="1499.70" y="561.00" font-size="36.23" fill="#f4f4f4" textLength="333.30" lengthAdjust="spacingAndGlyphs">Average Gamma: 2.222</text>
<rect x="150.00" y="582.70" width="1770.00" height="151.80" fill="#000000"/>
<line x1="251.60" y1="583.00" x2="251.60" y2="734.00" stroke="#121212" stroke-width="1.00"/>
<g transform="translate(266,616) rotate(-90)">
<text x="-20.40" y="0.00" font-size="13.91" fill="#f0f0f0" textLength="40.80" lengthAdjust="spacingAndGlyphs">Actual</text>
</g>
<g transform="translate(266,682) rotate(-90)">
<text x="-20.10" y="0.00" font-size="13.91" fill="#f0f0f0" textLength="40.20" lengthAdjust="spacingAndGlyphs">Target</text>
</g>
<rect x="275.60" y="590.00" width="127.40" height="59.00" fill="#08090a"/>
<rect x="275.60" y="649.00" width="127.40" height="58.50" fill="#030303"/>
<rect x="276.30" y="590.7" width="126" height="116.3" fill="none" stroke="#f4f4f4" stroke-width="1.5"/>
<text x="339.30" y="724.60" font-size="14.20" fill="#f0f0f0" text-anchor="middle" textLength="7.27" lengthAdjust="spacingAndGlyphs">0</text>
<rect x="424.60" y="590.00" width="127.40" height="59.00" fill="#1a1c1b"/>
<rect x="424.60" y="649.00" width="127.40" height="58.50" fill="#1d1d1d"/>
<rect x="425.30" y="590.7" width="126" height="116.3" fill="none" stroke="#f4f4f4" stroke-width="1.5"/>
<text x="488.30" y="724.60" font-size="14.20" fill="#f0f0f0" text-anchor="middle" textLength="14.53" lengthAdjust="spacingAndGlyphs">10</text>
<rect x="573.60" y="590.00" width="127.40" height="59.00" fill="#2e302f"/>
<rect x="573.60" y="649.00" width="127.40" height="58.50" fill="#333333"/>
<rect x="574.30" y="590.7" width="126" height="116.3" fill="none" stroke="#f4f4f4" stroke-width="1.5"/>
<text x="637.30" y="724.60" font-size="14.20" fill="#f0f0f0" text-anchor="middle" textLength="14.53" lengthAdjust="spacingAndGlyphs">20</text>
<rect x="722.60" y="590.00" width="127.40" height="59.00" fill="#484b4a"/>
<rect x="722.60" y="649.00" width="127.40" height="58.50" fill="#4f4f4f"/>
<rect x="723.30" y="590.7" width="126" height="116.3" fill="none" stroke="#f4f4f4" stroke-width="1.5"/>
<text x="786.30" y="724.60" font-size="14.20" fill="#f0f0f0" text-anchor="middle" textLength="14.53" lengthAdjust="spacingAndGlyphs">30</text>
<rect x="871.60" y="590.00" width="127.40" height="59.00" fill="#626663"/>
<rect x="871.60" y="649.00" width="127.40" height="58.50" fill="#6b6b6b"/>
<rect x="872.30" y="590.7" width="126" height="116.3" fill="none" stroke="#f4f4f4" stroke-width="1.5"/>
<text x="935.30" y="724.60" font-size="14.20" fill="#f0f0f0" text-anchor="middle" textLength="14.53" lengthAdjust="spacingAndGlyphs">40</text>
<rect x="1020.60" y="590.00" width="127.40" height="59.00" fill="#7b817d"/>
<rect x="1020.60" y="649.00" width="127.40" height="58.50" fill="#848484"/>
<rect x="1021.30" y="590.7" width="126" height="116.3" fill="none" stroke="#f4f4f4" stroke-width="1.5"/>
<text x="1084.30" y="724.60" font-size="14.20" fill="#f0f0f0" text-anchor="middle" textLength="14.53" lengthAdjust="spacingAndGlyphs">50</text>
<rect x="1169.60" y="590.00" width="127.40" height="59.00" fill="#939995"/>
<rect x="1169.60" y="649.00" width="127.40" height="58.50" fill="#9c9c9c"/>
<rect x="1170.30" y="590.7" width="126" height="116.3" fill="none" stroke="#f4f4f4" stroke-width="1.5"/>
<text x="1233.30" y="724.60" font-size="14.20" fill="#f0f0f0" text-anchor="middle" textLength="14.53" lengthAdjust="spacingAndGlyphs">60</text>
<rect x="1318.60" y="590.00" width="127.40" height="59.00" fill="#aab3ab"/>
<rect x="1318.60" y="649.00" width="127.40" height="58.50" fill="#b4b4b4"/>
<rect x="1319.30" y="590.7" width="126" height="116.3" fill="none" stroke="#f4f4f4" stroke-width="1.5"/>
<text x="1382.30" y="724.60" font-size="14.20" fill="#f0f0f0" text-anchor="middle" textLength="14.53" lengthAdjust="spacingAndGlyphs">70</text>
<rect x="1467.60" y="590.00" width="127.40" height="59.00" fill="#c6cfc7"/>
<rect x="1467.60" y="649.00" width="127.40" height="58.50" fill="#cccccc"/>
<rect x="1468.30" y="590.7" width="126" height="116.3" fill="none" stroke="#f4f4f4" stroke-width="1.5"/>
<text x="1531.30" y="724.60" font-size="14.20" fill="#f0f0f0" text-anchor="middle" textLength="14.53" lengthAdjust="spacingAndGlyphs">80</text>
<rect x="1616.60" y="590.00" width="127.40" height="59.00" fill="#e0e8e0"/>
<rect x="1616.60" y="649.00" width="127.40" height="58.50" fill="#e5e5e5"/>
<rect x="1617.30" y="590.7" width="126" height="116.3" fill="none" stroke="#f4f4f4" stroke-width="1.5"/>
<text x="1680.30" y="724.60" font-size="14.20" fill="#f0f0f0" text-anchor="middle" textLength="14.53" lengthAdjust="spacingAndGlyphs">90</text>
<rect x="1765.60" y="590.00" width="127.40" height="59.00" fill="#f4fff6"/>
<rect x="1765.60" y="649.00" width="127.40" height="58.50" fill="#fafafa"/>
<rect x="1766.30" y="590.7" width="126" height="116.3" fill="none" stroke="#f4f4f4" stroke-width="1.5"/>
<text x="1829.30" y="724.60" font-size="14.20" fill="#f0f0f0" text-anchor="middle" textLength="21.80" lengthAdjust="spacingAndGlyphs">100</text>
<text x="172.70" y="811.80" font-size="34.06" fill="#f2f2f2" textLength="232.00" lengthAdjust="spacingAndGlyphs">Current Reading</text>
<text x="172.70" y="860.50" font-size="27.39" fill="#f2f2f2" textLength="108.20" lengthAdjust="spacingAndGlyphs">x: 0.3105</text>
<text x="331.50" y="860.50" font-size="27.39" fill="#f2f2f2" textLength="108.10" lengthAdjust="spacingAndGlyphs">y: 0.3364</text>
<text x="172.70" y="899.60" font-size="27.54" fill="#f2f2f2" textLength="118.30" lengthAdjust="spacingAndGlyphs">u': 0.1936</text>
<text x="331.50" y="899.60" font-size="27.54" fill="#f2f2f2" textLength="115.10" lengthAdjust="spacingAndGlyphs">v': 0.4719</text>
<text x="172.70" y="939.00" font-size="27.54" fill="#f2f2f2" textLength="198.20" lengthAdjust="spacingAndGlyphs">cd/m²: 265.7225</text>
<text x="172.70" y="978.20" font-size="27.83" fill="#f2f2f2" textLength="163.30" lengthAdjust="spacingAndGlyphs">ΔE 2000: 6.54</text>
<text x="612.40" y="772.90" font-size="16.09" fill="#e6e6e6" textLength="80.10" lengthAdjust="spacingAndGlyphs">CIE 1931 xy</text>
<rect x="536.50" y="778.80" width="268.20" height="191.40" fill="url(#cieTop)"/>
<rect x="536.50" y="778.80" width="268.20" height="191.40" fill="url(#cieMid)" mask="url(#mMid)"/>
<rect x="536.50" y="874.50" width="268.20" height="95.70" fill="url(#cieBot)" mask="url(#mDown)"/>
<rect x="536.50" y="778.80" width="268.20" height="191.40" fill="url(#cieW)"/>
<rect x="536.5" y="778.8" width="268.2" height="191.4" fill="none" stroke="#a8a8a8" stroke-width="1.6"/>
<line x1="571.50" y1="970.00" x2="804.00" y2="810.20" stroke="#000000" stroke-width="3.20"/>
<circle cx="650" cy="849" r="5" fill="#333" stroke="#111" stroke-width="1"/>
<circle cx="652" cy="847" r="5" fill="#444" stroke="#111" stroke-width="1"/>
<circle cx="654.5" cy="845.5" r="5" fill="#666" stroke="#111" stroke-width="1"/>
<circle cx="658" cy="844.5" r="5" fill="#ffffff" stroke="#111" stroke-width="1.2"/>
<circle cx="619.50" cy="867.00" r="5.20" fill="#111111"/>
<rect x="663.7" y="865.8" width="13.6" height="14.8" fill="#ffffff" stroke="#000" stroke-width="1.8"/>
<line x1="530.50" y1="833.50" x2="536.50" y2="833.50" stroke="#dddddd" stroke-width="1.50"/>
<text x="530.20" y="839.50" font-size="16.52" fill="#e6e6e6" text-anchor="end" textLength="30.87" lengthAdjust="spacingAndGlyphs">0.34</text>
<line x1="530.50" y1="911.00" x2="536.50" y2="911.00" stroke="#dddddd" stroke-width="1.50"/>
<text x="530.20" y="917.00" font-size="16.52" fill="#e6e6e6" text-anchor="end" textLength="30.87" lengthAdjust="spacingAndGlyphs">0.32</text>
<line x1="549.00" y1="970.20" x2="549.00" y2="976.20" stroke="#dddddd" stroke-width="1.50"/>
<text x="549.00" y="995.00" font-size="16.23" fill="#e6e6e6" text-anchor="middle" textLength="30.33" lengthAdjust="spacingAndGlyphs">0.29</text>
<line x1="602.55" y1="970.20" x2="602.55" y2="976.20" stroke="#dddddd" stroke-width="1.50"/>
<text x="602.55" y="995.00" font-size="16.23" fill="#e6e6e6" text-anchor="middle" textLength="21.66" lengthAdjust="spacingAndGlyphs">0.3</text>
<line x1="656.10" y1="970.20" x2="656.10" y2="976.20" stroke="#dddddd" stroke-width="1.50"/>
<text x="656.10" y="995.00" font-size="16.23" fill="#e6e6e6" text-anchor="middle" textLength="30.33" lengthAdjust="spacingAndGlyphs">0.31</text>
<line x1="709.65" y1="970.20" x2="709.65" y2="976.20" stroke="#dddddd" stroke-width="1.50"/>
<text x="709.65" y="995.00" font-size="16.23" fill="#e6e6e6" text-anchor="middle" textLength="30.33" lengthAdjust="spacingAndGlyphs">0.32</text>
<line x1="763.20" y1="970.20" x2="763.20" y2="976.20" stroke="#dddddd" stroke-width="1.50"/>
<text x="763.20" y="995.00" font-size="16.23" fill="#e6e6e6" text-anchor="middle" textLength="30.33" lengthAdjust="spacingAndGlyphs">0.33</text>
<rect x="816.00" y="745.00" width="909.00" height="15.00" fill="#2c2c2c"/>
<rect x="816.00" y="760.00" width="909.00" height="13.60" fill="#131313"/>
<rect x="816.00" y="745.00" width="11.00" height="28.60" fill="#000000"/>
<rect x="816.00" y="773.80" width="909.00" height="26.95" fill="#3e3e3e"/>
<rect x="816.00" y="773.80" width="11.00" height="26.95" fill="#252525"/>
<text x="831.00" y="793.90" font-size="17.10" fill="#f0f0f0" textLength="46.56" lengthAdjust="spacingAndGlyphs">x: CIE31</text>
<text x="940.90" y="793.90" font-size="17.10" fill="#f0f0f0" textLength="41.85" lengthAdjust="spacingAndGlyphs">0.2638</text>
<text x="1019.10" y="793.90" font-size="17.10" fill="#f0f0f0" textLength="41.85" lengthAdjust="spacingAndGlyphs">0.3034</text>
<text x="1090.10" y="793.90" font-size="17.10" fill="#f0f0f0" textLength="41.85" lengthAdjust="spacingAndGlyphs">0.3089</text>
<text x="1160.80" y="793.90" font-size="17.10" fill="#f0f0f0" textLength="41.85" lengthAdjust="spacingAndGlyphs">0.3093</text>
<text x="1231.60" y="793.90" font-size="17.10" fill="#f0f0f0" textLength="41.85" lengthAdjust="spacingAndGlyphs">0.3097</text>
<text x="1302.70" y="793.90" font-size="17.10" fill="#f0f0f0" textLength="41.85" lengthAdjust="spacingAndGlyphs">0.3100</text>
<text x="1373.50" y="793.90" font-size="17.10" fill="#f0f0f0" textLength="41.85" lengthAdjust="spacingAndGlyphs">0.3104</text>
<text x="1444.50" y="793.90" font-size="17.10" fill="#f0f0f0" textLength="41.85" lengthAdjust="spacingAndGlyphs">0.3105</text>
<text x="1515.20" y="793.90" font-size="17.10" fill="#f0f0f0" textLength="41.85" lengthAdjust="spacingAndGlyphs">0.3107</text>
<text x="1586.00" y="793.90" font-size="17.10" fill="#f0f0f0" textLength="41.85" lengthAdjust="spacingAndGlyphs">0.3107</text>
<text x="1657.00" y="793.90" font-size="17.10" fill="#f0f0f0" textLength="41.85" lengthAdjust="spacingAndGlyphs">0.3105</text>
<rect x="816.00" y="800.75" width="909.00" height="26.95" fill="#858585"/>
<rect x="816.00" y="800.75" width="11.00" height="26.95" fill="#2a2a2a"/>
<text x="831.00" y="820.85" font-size="17.10" fill="#f0f0f0" textLength="46.56" lengthAdjust="spacingAndGlyphs">y: CIE31</text>
<text x="940.90" y="820.85" font-size="17.10" fill="#f0f0f0" textLength="41.85" lengthAdjust="spacingAndGlyphs">0.2852</text>
<text x="1019.10" y="820.85" font-size="17.10" fill="#f0f0f0" textLength="41.85" lengthAdjust="spacingAndGlyphs">0.3309</text>
<text x="1090.10" y="820.85" font-size="17.10" fill="#f0f0f0" textLength="41.85" lengthAdjust="spacingAndGlyphs">0.3360</text>
<text x="1160.80" y="820.85" font-size="17.10" fill="#f0f0f0" textLength="41.85" lengthAdjust="spacingAndGlyphs">0.3352</text>
<text x="1231.60" y="820.85" font-size="17.10" fill="#f0f0f0" textLength="41.85" lengthAdjust="spacingAndGlyphs">0.3362</text>
<text x="1302.70" y="820.85" font-size="17.10" fill="#f0f0f0" textLength="41.85" lengthAdjust="spacingAndGlyphs">0.3363</text>
<text x="1373.50" y="820.85" font-size="17.10" fill="#f0f0f0" textLength="41.85" lengthAdjust="spacingAndGlyphs">0.3368</text>
<text x="1444.50" y="820.85" font-size="17.10" fill="#f0f0f0" textLength="41.85" lengthAdjust="spacingAndGlyphs">0.3369</text>
<text x="1515.20" y="820.85" font-size="17.10" fill="#f0f0f0" textLength="41.85" lengthAdjust="spacingAndGlyphs">0.3368</text>
<text x="1586.00" y="820.85" font-size="17.10" fill="#f0f0f0" textLength="41.85" lengthAdjust="spacingAndGlyphs">0.3367</text>
<text x="1657.00" y="820.85" font-size="17.10" fill="#f0f0f0" textLength="41.85" lengthAdjust="spacingAndGlyphs">0.3364</text>
<rect x="816.00" y="827.70" width="909.00" height="26.95" fill="#3e3e3e"/>
<rect x="816.00" y="827.70" width="11.00" height="26.95" fill="#252525"/>
<text x="831.00" y="847.80" font-size="17.10" fill="#f0f0f0" textLength="9.13" lengthAdjust="spacingAndGlyphs">Y</text>
<text x="940.90" y="847.80" font-size="17.10" fill="#f0f0f0" textLength="41.85" lengthAdjust="spacingAndGlyphs">0.2838</text>
<text x="1019.10" y="847.80" font-size="17.10" fill="#f0f0f0" textLength="41.85" lengthAdjust="spacingAndGlyphs">2.1351</text>
<text x="1090.10" y="847.80" font-size="17.10" fill="#f0f0f0" textLength="41.85" lengthAdjust="spacingAndGlyphs">7.5867</text>
<text x="1160.80" y="847.80" font-size="17.10" fill="#f0f0f0" textLength="49.45" lengthAdjust="spacingAndGlyphs">17.7413</text>
<text x="1231.60" y="847.80" font-size="17.10" fill="#f0f0f0" textLength="49.45" lengthAdjust="spacingAndGlyphs">33.8034</text>
<text x="1302.70" y="847.80" font-size="17.10" fill="#f0f0f0" textLength="49.45" lengthAdjust="spacingAndGlyphs">56.0905</text>
<text x="1373.50" y="847.80" font-size="17.10" fill="#f0f0f0" textLength="49.45" lengthAdjust="spacingAndGlyphs">83.9924</text>
<text x="1444.50" y="847.80" font-size="17.10" fill="#f0f0f0" textLength="57.06" lengthAdjust="spacingAndGlyphs">118.5870</text>
<text x="1515.20" y="847.80" font-size="17.10" fill="#f0f0f0" textLength="57.06" lengthAdjust="spacingAndGlyphs">161.5602</text>
<text x="1586.00" y="847.80" font-size="17.10" fill="#f0f0f0" textLength="57.06" lengthAdjust="spacingAndGlyphs">211.7267</text>
<text x="1657.00" y="847.80" font-size="17.10" fill="#f0f0f0" textLength="57.06" lengthAdjust="spacingAndGlyphs">265.7225</text>
<rect x="816.00" y="854.65" width="909.00" height="26.95" fill="#858585"/>
<rect x="816.00" y="854.65" width="11.00" height="26.95" fill="#2a2a2a"/>
<text x="831.00" y="874.75" font-size="17.10" fill="#f0f0f0" textLength="49.52" lengthAdjust="spacingAndGlyphs">Target Y</text>
<text x="940.90" y="874.75" font-size="17.10" fill="#f0f0f0" textLength="41.85" lengthAdjust="spacingAndGlyphs">0.0000</text>
<text x="1019.10" y="874.75" font-size="17.10" fill="#f0f0f0" textLength="41.85" lengthAdjust="spacingAndGlyphs">2.7449</text>
<text x="1090.10" y="874.75" font-size="17.10" fill="#f0f0f0" textLength="41.85" lengthAdjust="spacingAndGlyphs">8.7967</text>
<text x="1160.80" y="874.75" font-size="17.10" fill="#f0f0f0" textLength="49.45" lengthAdjust="spacingAndGlyphs">19.2043</text>
<text x="1231.60" y="874.75" font-size="17.10" fill="#f0f0f0" textLength="49.45" lengthAdjust="spacingAndGlyphs">35.3061</text>
<text x="1302.70" y="874.75" font-size="17.10" fill="#f0f0f0" textLength="49.45" lengthAdjust="spacingAndGlyphs">57.3590</text>
<rect x="1370.20" y="855.40" width="69.80" height="25.50" fill="#f0f0f0"/>
<text x="1373.50" y="874.75" font-size="17.10" fill="#111111" textLength="49.45" lengthAdjust="spacingAndGlyphs">84.6450</text>
<text x="1444.50" y="874.75" font-size="17.10" fill="#f0f0f0" textLength="57.06" lengthAdjust="spacingAndGlyphs">118.3000</text>
<text x="1515.20" y="874.75" font-size="17.10" fill="#f0f0f0" textLength="57.06" lengthAdjust="spacingAndGlyphs">160.4505</text>
<text x="1586.00" y="874.75" font-size="17.10" fill="#f0f0f0" textLength="57.06" lengthAdjust="spacingAndGlyphs">210.2657</text>
<text x="1657.00" y="874.75" font-size="17.10" fill="#f0f0f0" textLength="57.06" lengthAdjust="spacingAndGlyphs">265.7225</text>
<rect x="816.00" y="881.60" width="909.00" height="26.95" fill="#3e3e3e"/>
<rect x="816.00" y="881.60" width="11.00" height="26.95" fill="#252525"/>
<text x="831.00" y="901.70" font-size="17.10" fill="#f0f0f0" textLength="101.91" lengthAdjust="spacingAndGlyphs">Gamma Log/Log</text>
<text x="940.90" y="901.70" font-size="17.10" fill="#f0f0f0" textLength="41.85" lengthAdjust="spacingAndGlyphs">1.2778</text>
<text x="1019.10" y="901.70" font-size="17.10" fill="#f0f0f0" textLength="41.85" lengthAdjust="spacingAndGlyphs">2.1128</text>
<text x="1090.10" y="901.70" font-size="17.10" fill="#f0f0f0" textLength="41.85" lengthAdjust="spacingAndGlyphs">2.2095</text>
<text x="1160.80" y="901.70" font-size="17.10" fill="#f0f0f0" textLength="41.85" lengthAdjust="spacingAndGlyphs">2.2358</text>
<text x="1231.60" y="901.70" font-size="17.10" fill="#f0f0f0" textLength="41.85" lengthAdjust="spacingAndGlyphs">2.2503</text>
<text x="1302.70" y="901.70" font-size="17.10" fill="#f0f0f0" textLength="41.85" lengthAdjust="spacingAndGlyphs">2.2568</text>
<text x="1373.50" y="901.70" font-size="17.10" fill="#f0f0f0" textLength="41.85" lengthAdjust="spacingAndGlyphs">2.2546</text>
<text x="1444.50" y="901.70" font-size="17.10" fill="#f0f0f0" textLength="41.85" lengthAdjust="spacingAndGlyphs">2.2444</text>
<text x="1515.20" y="901.70" font-size="17.10" fill="#f0f0f0" textLength="41.85" lengthAdjust="spacingAndGlyphs">2.2298</text>
<text x="1586.00" y="901.70" font-size="17.10" fill="#f0f0f0" textLength="41.85" lengthAdjust="spacingAndGlyphs">2.2015</text>
<text x="1657.00" y="901.70" font-size="17.10" fill="#f0f0f0" textLength="41.85" lengthAdjust="spacingAndGlyphs">2.2749</text>
<rect x="816.00" y="908.55" width="909.00" height="26.95" fill="#858585"/>
<rect x="816.00" y="908.55" width="11.00" height="26.95" fill="#2a2a2a"/>
<text x="831.00" y="928.65" font-size="17.10" fill="#f0f0f0" textLength="24.95" lengthAdjust="spacingAndGlyphs">CCT</text>
<text x="940.90" y="928.65" font-size="17.10" fill="#f0f0f0" textLength="72.28" lengthAdjust="spacingAndGlyphs">12040.0000</text>
<text x="1019.10" y="928.65" font-size="17.10" fill="#f0f0f0" textLength="64.67" lengthAdjust="spacingAndGlyphs">7008.0000</text>
<text x="1090.10" y="928.65" font-size="17.10" fill="#f0f0f0" textLength="64.67" lengthAdjust="spacingAndGlyphs">6654.0000</text>
<text x="1160.80" y="928.65" font-size="17.10" fill="#f0f0f0" textLength="64.67" lengthAdjust="spacingAndGlyphs">6641.0000</text>
<text x="1231.60" y="928.65" font-size="17.10" fill="#f0f0f0" textLength="64.67" lengthAdjust="spacingAndGlyphs">6610.0000</text>
<text x="1302.70" y="928.65" font-size="17.10" fill="#f0f0f0" textLength="64.67" lengthAdjust="spacingAndGlyphs">6595.0000</text>
<text x="1373.50" y="928.65" font-size="17.10" fill="#f0f0f0" textLength="64.67" lengthAdjust="spacingAndGlyphs">6571.0000</text>
<text x="1444.50" y="928.65" font-size="17.10" fill="#f0f0f0" textLength="64.67" lengthAdjust="spacingAndGlyphs">6563.0000</text>
<text x="1515.20" y="928.65" font-size="17.10" fill="#f0f0f0" textLength="64.67" lengthAdjust="spacingAndGlyphs">6555.0000</text>
<text x="1586.00" y="928.65" font-size="17.10" fill="#f0f0f0" textLength="64.67" lengthAdjust="spacingAndGlyphs">6557.0000</text>
<text x="1657.00" y="928.65" font-size="17.10" fill="#f0f0f0" textLength="64.67" lengthAdjust="spacingAndGlyphs">6565.0000</text>
<rect x="816.00" y="935.50" width="909.00" height="26.95" fill="#3e3e3e"/>
<rect x="816.00" y="935.50" width="11.00" height="26.95" fill="#252525"/>
<text x="831.00" y="955.60" font-size="17.10" fill="#f0f0f0" textLength="50.86" lengthAdjust="spacingAndGlyphs">ΔE 2000</text>
<text x="940.90" y="955.60" font-size="17.10" fill="#f0f0f0" textLength="41.85" lengthAdjust="spacingAndGlyphs">0.9387</text>
<text x="1019.10" y="955.60" font-size="17.10" fill="#f0f0f0" textLength="41.85" lengthAdjust="spacingAndGlyphs">2.0280</text>
<text x="1090.10" y="955.60" font-size="17.10" fill="#f0f0f0" textLength="41.85" lengthAdjust="spacingAndGlyphs">2.7497</text>
<text x="1160.80" y="955.60" font-size="17.10" fill="#f0f0f0" textLength="41.85" lengthAdjust="spacingAndGlyphs">3.0531</text>
<text x="1231.60" y="955.60" font-size="17.10" fill="#f0f0f0" textLength="41.85" lengthAdjust="spacingAndGlyphs">3.7971</text>
<text x="1302.70" y="955.60" font-size="17.10" fill="#f0f0f0" textLength="41.85" lengthAdjust="spacingAndGlyphs">4.3100</text>
<text x="1373.50" y="955.60" font-size="17.10" fill="#f0f0f0" textLength="41.85" lengthAdjust="spacingAndGlyphs">4.9229</text>
<text x="1444.50" y="955.60" font-size="17.10" fill="#f0f0f0" textLength="41.85" lengthAdjust="spacingAndGlyphs">5.4491</text>
<text x="1515.20" y="955.60" font-size="17.10" fill="#f0f0f0" textLength="41.85" lengthAdjust="spacingAndGlyphs">5.8345</text>
<text x="1586.00" y="955.60" font-size="17.10" fill="#f0f0f0" textLength="41.85" lengthAdjust="spacingAndGlyphs">6.2108</text>
<text x="1657.00" y="955.60" font-size="17.10" fill="#f0f0f0" textLength="41.85" lengthAdjust="spacingAndGlyphs">6.5428</text>
<rect x="816.00" y="962.45" width="909.00" height="26.95" fill="#858585"/>
<rect x="816.00" y="962.45" width="11.00" height="26.95" fill="#2a2a2a"/>
<text x="831.00" y="982.55" font-size="17.10" fill="#f0f0f0" textLength="35.40" lengthAdjust="spacingAndGlyphs">dEITP</text>
<text x="940.90" y="982.55" font-size="17.10" fill="#f0f0f0" textLength="49.45" lengthAdjust="spacingAndGlyphs">69.4147</text>
<text x="1019.10" y="982.55" font-size="17.10" fill="#f0f0f0" textLength="49.45" lengthAdjust="spacingAndGlyphs">11.9546</text>
<text x="1090.10" y="982.55" font-size="17.10" fill="#f0f0f0" textLength="41.85" lengthAdjust="spacingAndGlyphs">9.0920</text>
<text x="1160.80" y="982.55" font-size="17.10" fill="#f0f0f0" textLength="41.85" lengthAdjust="spacingAndGlyphs">6.2592</text>
<text x="1231.60" y="982.55" font-size="17.10" fill="#f0f0f0" textLength="41.85" lengthAdjust="spacingAndGlyphs">5.1278</text>
<text x="1302.70" y="982.55" font-size="17.10" fill="#f0f0f0" textLength="41.85" lengthAdjust="spacingAndGlyphs">4.5640</text>
<text x="1373.50" y="982.55" font-size="17.10" fill="#f0f0f0" textLength="41.85" lengthAdjust="spacingAndGlyphs">4.4505</text>
<text x="1444.50" y="982.55" font-size="17.10" fill="#f0f0f0" textLength="41.85" lengthAdjust="spacingAndGlyphs">4.4718</text>
<text x="1515.20" y="982.55" font-size="17.10" fill="#f0f0f0" textLength="41.85" lengthAdjust="spacingAndGlyphs">4.4356</text>
<text x="1586.00" y="982.55" font-size="17.10" fill="#f0f0f0" textLength="41.85" lengthAdjust="spacingAndGlyphs">4.4222</text>
<text x="1657.00" y="982.55" font-size="17.10" fill="#f0f0f0" textLength="41.85" lengthAdjust="spacingAndGlyphs">4.4161</text>
<text x="941.40" y="765.30" font-size="16.23" fill="#f0f0f0" textLength="6.86" lengthAdjust="spacingAndGlyphs">0</text>
<text x="1019.60" y="765.30" font-size="16.23" fill="#f0f0f0" textLength="13.72" lengthAdjust="spacingAndGlyphs">10</text>
<text x="1090.60" y="765.30" font-size="16.23" fill="#f0f0f0" textLength="13.72" lengthAdjust="spacingAndGlyphs">20</text>
<text x="1161.30" y="765.30" font-size="16.23" fill="#f0f0f0" textLength="13.72" lengthAdjust="spacingAndGlyphs">30</text>
<text x="1232.10" y="765.30" font-size="16.23" fill="#f0f0f0" textLength="13.72" lengthAdjust="spacingAndGlyphs">40</text>
<text x="1303.20" y="765.30" font-size="16.23" fill="#f0f0f0" textLength="13.72" lengthAdjust="spacingAndGlyphs">50</text>
<text x="1374.00" y="765.30" font-size="16.23" fill="#f0f0f0" textLength="13.72" lengthAdjust="spacingAndGlyphs">60</text>
<text x="1445.00" y="765.30" font-size="16.23" fill="#f0f0f0" textLength="13.72" lengthAdjust="spacingAndGlyphs">70</text>
<text x="1515.70" y="765.30" font-size="16.23" fill="#f0f0f0" textLength="13.72" lengthAdjust="spacingAndGlyphs">80</text>
<text x="1586.50" y="765.30" font-size="16.23" fill="#f0f0f0" textLength="13.72" lengthAdjust="spacingAndGlyphs">90</text>
<text x="1657.50" y="765.30" font-size="16.23" fill="#f0f0f0" textLength="20.58" lengthAdjust="spacingAndGlyphs">100</text>
<rect x="150.00" y="1011.00" width="1770.00" height="47.00" fill="url(#stripg)"/>
<rect x="150.80" y="1011.5" width="112.2" height="50" rx="3" fill="url(#sbtn)" stroke="#444" stroke-width="0.8"/>
<rect x="154.60" y="1015" width="104.8" height="27" rx="2.5" fill="#000000" stroke="#8a8a8a" stroke-width="0.6"/>
<text x="206.80" y="1053.50" font-size="8.55" fill="#2e2e2e" text-anchor="middle" textLength="4.28" lengthAdjust="spacingAndGlyphs">0</text>
<rect x="264.80" y="1011.5" width="112.2" height="50" rx="3" fill="url(#sbtn)" stroke="#444" stroke-width="0.8"/>
<rect x="268.60" y="1015" width="104.8" height="27" rx="2.5" fill="#1a1a1a" stroke="#8a8a8a" stroke-width="0.6"/>
<text x="320.80" y="1053.50" font-size="8.55" fill="#2e2e2e" text-anchor="middle" textLength="8.56" lengthAdjust="spacingAndGlyphs">10</text>
<rect x="378.80" y="1011.5" width="112.2" height="50" rx="3" fill="url(#sbtn)" stroke="#444" stroke-width="0.8"/>
<rect x="382.60" y="1015" width="104.8" height="27" rx="2.5" fill="#333333" stroke="#8a8a8a" stroke-width="0.6"/>
<text x="434.80" y="1053.50" font-size="8.55" fill="#2e2e2e" text-anchor="middle" textLength="8.56" lengthAdjust="spacingAndGlyphs">20</text>
<rect x="492.80" y="1011.5" width="112.2" height="50" rx="3" fill="url(#sbtn)" stroke="#444" stroke-width="0.8"/>
<rect x="496.60" y="1015" width="104.8" height="27" rx="2.5" fill="#4d4d4d" stroke="#8a8a8a" stroke-width="0.6"/>
<text x="548.80" y="1053.50" font-size="8.55" fill="#2e2e2e" text-anchor="middle" textLength="8.56" lengthAdjust="spacingAndGlyphs">30</text>
<rect x="606.80" y="1011.5" width="112.2" height="50" rx="3" fill="url(#sbtn)" stroke="#444" stroke-width="0.8"/>
<rect x="610.60" y="1015" width="104.8" height="27" rx="2.5" fill="#666666" stroke="#8a8a8a" stroke-width="0.6"/>
<text x="662.80" y="1053.50" font-size="8.55" fill="#2e2e2e" text-anchor="middle" textLength="8.56" lengthAdjust="spacingAndGlyphs">40</text>
<rect x="720.80" y="1011.5" width="112.2" height="50" rx="3" fill="url(#sbtn)" stroke="#444" stroke-width="0.8"/>
<rect x="724.60" y="1015" width="104.8" height="27" rx="2.5" fill="#808080" stroke="#8a8a8a" stroke-width="0.6"/>
<text x="776.80" y="1053.50" font-size="8.55" fill="#2e2e2e" text-anchor="middle" textLength="8.56" lengthAdjust="spacingAndGlyphs">50</text>
<rect x="834.80" y="1011.5" width="112.2" height="50" rx="3" fill="url(#sbtn)" stroke="#444" stroke-width="0.8"/>
<rect x="838.60" y="1015" width="104.8" height="27" rx="2.5" fill="#999999" stroke="#8a8a8a" stroke-width="0.6"/>
<text x="890.80" y="1053.50" font-size="8.55" fill="#2e2e2e" text-anchor="middle" textLength="8.56" lengthAdjust="spacingAndGlyphs">60</text>
<rect x="948.80" y="1011.5" width="112.2" height="50" rx="3" fill="url(#sbtn)" stroke="#444" stroke-width="0.8"/>
<rect x="952.60" y="1015" width="104.8" height="27" rx="2.5" fill="#b3b3b3" stroke="#8a8a8a" stroke-width="0.6"/>
<text x="1004.80" y="1053.50" font-size="8.55" fill="#2e2e2e" text-anchor="middle" textLength="8.56" lengthAdjust="spacingAndGlyphs">70</text>
<rect x="1062.80" y="1011.5" width="112.2" height="50" rx="3" fill="url(#sbtn)" stroke="#444" stroke-width="0.8"/>
<rect x="1066.60" y="1015" width="104.8" height="27" rx="2.5" fill="#cccccc" stroke="#8a8a8a" stroke-width="0.6"/>
<text x="1118.80" y="1053.50" font-size="8.55" fill="#2e2e2e" text-anchor="middle" textLength="8.56" lengthAdjust="spacingAndGlyphs">80</text>
<rect x="1176.80" y="1011.5" width="112.2" height="50" rx="3" fill="url(#sbtn)" stroke="#444" stroke-width="0.8"/>
<rect x="1180.60" y="1015" width="104.8" height="27" rx="2.5" fill="#e6e6e6" stroke="#8a8a8a" stroke-width="0.6"/>
<text x="1232.80" y="1053.50" font-size="8.55" fill="#2e2e2e" text-anchor="middle" textLength="8.56" lengthAdjust="spacingAndGlyphs">90</text>
<rect x="1290.80" y="1011.5" width="112.2" height="50" rx="3" fill="#262626"/>
<rect x="1294.80" y="1015" width="105" height="27.2" rx="2.5" fill="#ffffff"/>
<text x="1346.80" y="1053.50" font-size="8.99" fill="#ffffff" text-anchor="middle" textLength="13.49" lengthAdjust="spacingAndGlyphs" font-weight="bold">100</text>
<rect x="1714.5" y="1011.6" width="169.5" height="22.2" rx="2" fill="url(#rowg)"/>
<line x1="1749.30" y1="1012.00" x2="1749.30" y2="1033.50" stroke="#555" stroke-width="1.00"/>
<line x1="1783.40" y1="1012.00" x2="1783.40" y2="1033.50" stroke="#555" stroke-width="1.00"/>
<line x1="1816.30" y1="1012.00" x2="1816.30" y2="1033.50" stroke="#555" stroke-width="1.00"/>
<line x1="1850.50" y1="1012.00" x2="1850.50" y2="1033.50" stroke="#555" stroke-width="1.00"/>
<circle cx="1731.90" cy="1024.00" r="7.00" fill="#707070"/>
<circle cx="1766.00" cy="1024.00" r="7.00" fill="#707070"/>
<circle cx="1800.10" cy="1024.00" r="7.00" fill="#707070"/>
<circle cx="1834.20" cy="1024.00" r="7.00" fill="#707070"/>
<circle cx="1868.30" cy="1024.00" r="7.00" fill="#707070"/>
<rect x="1884" y="1011.6" width="36" height="22.2" fill="#2a2a2a"/>
<circle cx="1902.00" cy="1023.00" r="7.00" fill="#333"/>
<rect x="1678" y="1027" width="36" height="31" rx="3" fill="#606060"/>
<rect x="1685" y="1031" width="20" height="20" rx="3" fill="#8a8a8a" stroke="#222" stroke-width="1.5"/>
<rect x="1690.50" y="1036.50" width="9.00" height="9.00" fill="#000000"/>
<rect x="1714.5" y="1035" width="101.8" height="23" rx="2" fill="url(#navg)" stroke="#5a5a5a" stroke-width="0.8"/>
<rect x="1816.3" y="1035" width="103" height="23" rx="2" fill="url(#navg)" stroke="#5a5a5a" stroke-width="0.8"/>
<circle cx="1737.90" cy="1046.30" r="7.00" fill="#9c9c9c" stroke="#b8b8b8" stroke-width="0.6"/>
<text x="1737.90" y="1050.30" font-size="12.00" fill="#333" text-anchor="middle">«</text>
<circle cx="1897.20" cy="1046.30" r="7.00" fill="#9c9c9c" stroke="#b8b8b8" stroke-width="0.6"/>
<text x="1897.20" y="1050.30" font-size="12.00" fill="#333" text-anchor="middle">»</text>
<text x="1757.70" y="1051.70" font-size="16.52" fill="#222222" textLength="37.70" lengthAdjust="spacingAndGlyphs">Back</text>
<text x="1837.90" y="1051.70" font-size="16.52" fill="#222222" textLength="38.30" lengthAdjust="spacingAndGlyphs">Next</text>
<path d="M1631,996.7 L1669.7,1004.3 L1670.7,1026.4 L1640.7,1029.2 M1631,996.7 L1633.1,1033.3 L1656.6,1044.4 L1697.3,1032.6 L1674.5,1027.8" fill="none" stroke="#e6e6e6" stroke-width="4.8" stroke-linejoin="round" stroke-linecap="round" opacity="0.75"/>
<path d="M1631,996.7 L1669.7,1004.3 L1670.7,1026.4 L1640.7,1029.2 M1631,996.7 L1633.1,1033.3 L1656.6,1044.4 L1697.3,1032.6 L1674.5,1027.8" fill="none" stroke="#8e2630" stroke-width="3" stroke-linejoin="round" stroke-linecap="round" opacity="0.85"/>
<path d="M1642,1009.2 Q1647,1006 1653.8,1023.6 L1674.5,996" fill="none" stroke="#e6e6e6" stroke-width="5.2" stroke-linejoin="round" stroke-linecap="round" opacity="0.8"/>
<path d="M1642,1009.2 Q1647,1006 1653.8,1023.6 L1674.5,996" fill="none" stroke="#2e2e2e" stroke-width="3.4" stroke-linejoin="round" stroke-linecap="round"/>
<text x="1675.90" y="1024.70" font-size="27.68" fill="none" textLength="147.10" lengthAdjust="spacingAndGlyphs" font-weight="bold" stroke="#e8e8e8" stroke-width="4" stroke-opacity="0.75" stroke-linejoin="round">NOTEBOOK</text>
<text x="1675.90" y="1024.70" font-size="27.68" fill="#962c38" textLength="147.10" lengthAdjust="spacingAndGlyphs" font-weight="bold" stroke="#962c38" stroke-width="1.1" stroke-linejoin="round" opacity="0.8">NOTEBOOK</text>
<text x="1823.00" y="1024.70" font-size="27.68" fill="none" textLength="88.60" lengthAdjust="spacingAndGlyphs" stroke="#e8e8e8" stroke-width="3.6" stroke-opacity="0.8" stroke-linejoin="round">CHECK</text>
<text x="1823.00" y="1024.70" font-size="27.68" fill="#262626" textLength="88.60" lengthAdjust="spacingAndGlyphs" stroke="#262626" stroke-width="0.4" stroke-linejoin="round">CHECK</text>
</svg></body></html>
